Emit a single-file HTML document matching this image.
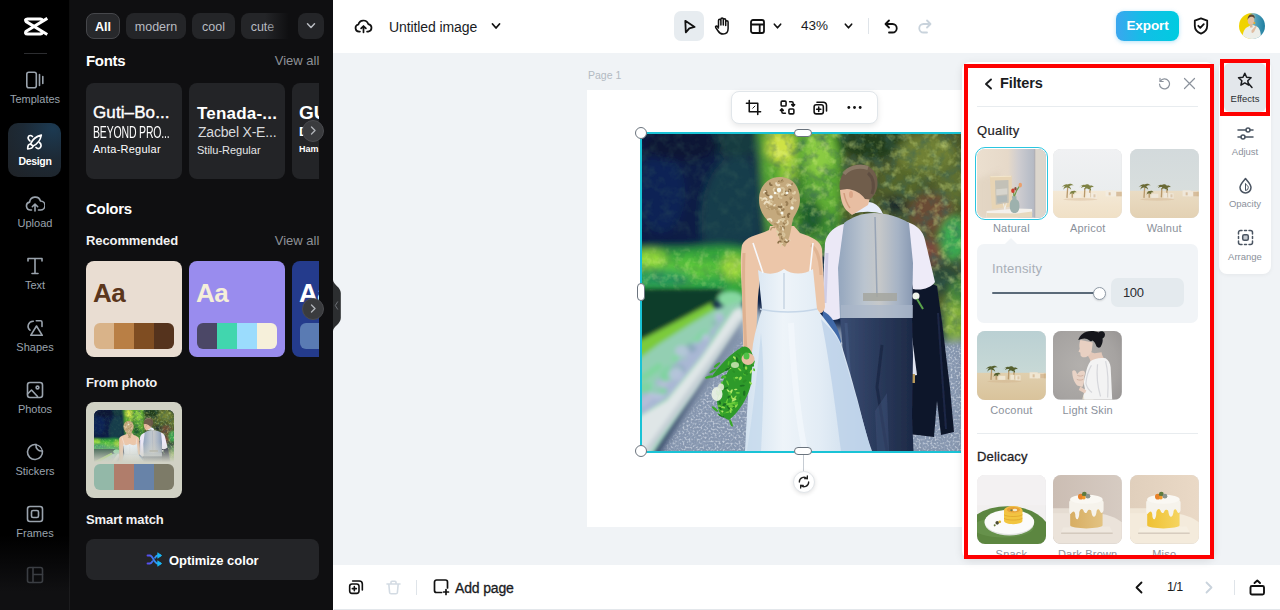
<!DOCTYPE html>
<html><head><meta charset="utf-8"><title>Untitled image</title>
<style>
*{box-sizing:border-box;margin:0;padding:0}
html,body{width:1280px;height:610px;overflow:hidden;background:#f0f3f6;font-family:"Liberation Sans",sans-serif;}
.abs{position:absolute}
#app{position:relative;width:1280px;height:610px;overflow:hidden}
/* left rail */
#rail{position:absolute;left:0;top:0;width:70px;height:610px;background:#000}
.ri{position:absolute;left:0;width:70px;text-align:center;color:#9aa3ad;font-size:11px;letter-spacing:0}
.ri svg{position:absolute;left:25px;top:0;width:20px;height:20px}
.ri span{position:absolute;left:0;width:70px;top:22.500px;line-height:13px}
/* left panel */
#panel{position:absolute;left:70px;top:0;width:263.300px;height:610px;background:#0f0f11}
.chip{position:absolute;top:13px;height:26px;border-radius:8px;background:#242528;color:#b9bcc2;font-size:12.5px;line-height:28px;text-align:center}
.h1{position:absolute;left:16px;color:#fff;font-weight:bold;font-size:15px;letter-spacing:-0.3px}
.h2{position:absolute;left:16px;color:#f2f2f3;font-weight:bold;font-size:13px;letter-spacing:-0.1px}
.va{position:absolute;right:14px;color:#8e9197;font-size:13px;text-align:right}
.fcard{position:absolute;top:83px;height:96px;background:#232427;border-radius:8px;overflow:hidden;color:#fff}
.ccard{position:absolute;top:261px;height:96px;border-radius:8px;overflow:hidden}
.sw{position:absolute;left:8px;top:62px;width:80px;height:26px;border-radius:6px;overflow:hidden;display:flex}
.sw i{flex:1;display:block}
.arrow{position:absolute;width:22px;height:22px;border-radius:50%;background:#3a3b3e;border:1px solid #4a4b4f}
/* top bar */
#top{position:absolute;left:334px;top:0;width:946px;box-shadow:-1px 0 0 #fff;height:53px;background:#fff}
#bottom{position:absolute;left:334px;top:565px;width:946px;height:45px;background:#fff;border-bottom:1px solid #e3e7eb;box-shadow:-1px 0 0 #fff}
.t{position:absolute;white-space:nowrap}
.th{position:absolute;width:68.800px;height:68.500px;border-radius:8px;overflow:hidden;background:#ddd}
.th svg{display:block}
.lb{position:absolute;width:68.800px;text-align:center;font-size:11px;color:#8b919b;white-space:nowrap;letter-spacing:0.2px}
</style></head><body><div id="app">

<!-- canvas -->
<div class="abs" style="left:334px;top:53px;width:946px;height:512px;background:#f0f3f6"></div>
<div class="t" style="left:588px;top:69px;font-size:10.5px;color:#b3bac2">Page 1</div>
<div class="abs" id="page" style="left:587px;top:90px;width:380px;height:437px;background:#fff"></div>

<!-- PHOTO -->
<div class="abs" id="photo" style="left:641px;top:133px;width:320px;height:318px;overflow:hidden">
<svg viewBox="0 0 325 318" width="325" height="318" preserveAspectRatio="none" style="display:block"><defs>
<filter id="bl8" x="-10%" y="-10%" width="120%" height="120%"><feGaussianBlur stdDeviation="4.500"/></filter>
<filter id="bl3" x="-10%" y="-10%" width="120%" height="120%"><feGaussianBlur stdDeviation="2"/></filter>
<filter id="bl1" x="-5%" y="-5%" width="110%" height="110%"><feGaussianBlur stdDeviation="0.600"/></filter>
<filter id="bl15" x="-5%" y="-5%" width="110%" height="110%"><feGaussianBlur stdDeviation="1.200"/></filter>
<linearGradient id="dress" x1="0" y1="0" x2="1" y2="0"><stop offset="0" stop-color="#d3e2f0"/><stop offset=".3" stop-color="#eef4f9"/><stop offset=".6" stop-color="#e2ecf5"/><stop offset="1" stop-color="#c5d7ea"/></linearGradient>
<linearGradient id="vest" x1="0" y1="0" x2="1" y2="0"><stop offset="0" stop-color="#94a6be"/><stop offset=".35" stop-color="#bac4cf"/><stop offset=".55" stop-color="#c6c8c9"/><stop offset=".8" stop-color="#a6b3c5"/><stop offset="1" stop-color="#8899b3"/></linearGradient>
<linearGradient id="trs" x1="0" y1="0" x2="1" y2="0"><stop offset="0" stop-color="#3a4d73"/><stop offset=".45" stop-color="#2c3c5e"/><stop offset="1" stop-color="#1d2a47"/></linearGradient>
<filter id="texd" x="0" y="0" width="100%" height="100%"><feTurbulence type="fractalNoise" baseFrequency="0.09" numOctaves="3" seed="7" result="n"/><feColorMatrix in="n" type="matrix" values="0 0 0 0 0.04  0 0 0 0 0.12  0 0 0 0 0.10  1.900 0 0 0 -0.800"/><feGaussianBlur stdDeviation="0.700"/></filter>
<filter id="texl" x="0" y="0" width="100%" height="100%"><feTurbulence type="fractalNoise" baseFrequency="0.12" numOctaves="3" seed="23" result="n"/><feColorMatrix in="n" type="matrix" values="0 0 0 0 0.78  0 0 0 0 0.92  0 0 0 0 0.30  0 2.200 0 0 -1.050"/><feGaussianBlur stdDeviation="0.600"/></filter>
<mask id="mfol" maskUnits="userSpaceOnUse" x="0" y="0" width="325" height="318"><path d="M126-10h210v215l-36 0V160H160l-30-45z" fill="#fff" filter="url(#bl8)"/></mask>
<mask id="mhed" maskUnits="userSpaceOnUse" x="0" y="0" width="325" height="318"><path d="M-10 116h125v40h-125z" fill="#fff" filter="url(#bl3)"/></mask>
<mask id="mdrk" maskUnits="userSpaceOnUse" x="0" y="0" width="325" height="318"><path d="M-10 -10h128v112h-128z" fill="#fff" filter="url(#bl8)"/></mask>
<filter id="texg" x="0" y="0" width="100%" height="100%"><feTurbulence type="fractalNoise" baseFrequency="0.550" numOctaves="2" seed="11" result="n"/><feColorMatrix in="n" type="matrix" values="0 0 0 0 0.25  0 0 0 0 0.32  0 0 0 0 0.46  2.600 0 0 0 -1.050"/><feGaussianBlur stdDeviation="0.450"/></filter>
<filter id="texgl" x="0" y="0" width="100%" height="100%"><feTurbulence type="fractalNoise" baseFrequency="0.500" numOctaves="2" seed="31" result="n"/><feColorMatrix in="n" type="matrix" values="0 0 0 0 0.85  0 0 0 0 0.89  0 0 0 0 0.94  0 2.600 0 0 -1.200"/><feGaussianBlur stdDeviation="0.450"/></filter>
<mask id="mgrv" maskUnits="userSpaceOnUse" x="0" y="0" width="325" height="318"><path d="M106 200L18 325h312V212h-50z" fill="#fff" filter="url(#bl3)"/></mask>
<pattern id="grv" width="6" height="6" patternUnits="userSpaceOnUse"><rect width="6" height="6" fill="#8391a8"/><circle cx="1.200" cy="1.400" r="1.100" fill="#56647e"/><circle cx="4.200" cy="4.200" r="1.200" fill="#b8c2cf"/><circle cx="4.500" cy="1.200" r=".8" fill="#6a7892"/><circle cx="1.500" cy="4.500" r=".8" fill="#9aa6b8"/></pattern>
</defs>
<g id="ph"><rect width="325" height="318" fill="#0e2146"/>
<g filter="url(#bl8)">
 <!-- dark left -->
 <rect x="-10" y="-10" width="140" height="136" fill="#0d1f44"/>
 <path d="M62 110c-4-30 0-60 14-76 10-10 24-14 34-6 8 10 10 40 8 82z" fill="#173c4c"/>
 <ellipse cx="20" cy="60" rx="24" ry="40" fill="#0e2454"/>
 <ellipse cx="95" cy="10" rx="30" ry="14" fill="#143a40"/>
 <ellipse cx="40" cy="12" rx="40" ry="16" fill="#0b1836"/>
 <!-- bright trees centre -->
 <path d="M116-10h90v130h-50l-30-10-6-70z" fill="#55a530"/>
 <ellipse cx="140" cy="14" rx="14" ry="16" fill="#cfe244"/>
 <ellipse cx="150" cy="40" rx="10" ry="14" fill="#9fd23c"/>
 <ellipse cx="178" cy="22" rx="14" ry="24" fill="#8acb42"/>
 <ellipse cx="183" cy="60" rx="10" ry="22" fill="#62b034"/>
 <ellipse cx="168" cy="86" rx="12" ry="20" fill="#2a6c2c"/>
 <ellipse cx="190" cy="100" rx="10" ry="20" fill="#3c8a30"/>
 <ellipse cx="158" cy="60" rx="5" ry="30" fill="#2e742c"/>
 <ellipse cx="172" cy="84" rx="10" ry="16" fill="#1f5c2a"/>
 <!-- top right olive -->
 <rect x="200" y="-10" width="135" height="190" fill="#4c5829"/>
 <ellipse cx="232" cy="8" rx="36" ry="20" fill="#233c1c"/>
 <ellipse cx="285" cy="22" rx="30" ry="20" fill="#6f8034"/>
 <ellipse cx="312" cy="50" rx="16" ry="24" fill="#5f7030"/>
 <ellipse cx="262" cy="48" rx="22" ry="14" fill="#55662c"/>
 <ellipse cx="255" cy="72" rx="12" ry="10" fill="#1c2c2a"/>
 <ellipse cx="290" cy="80" rx="22" ry="20" fill="#6a4c36"/>
 <ellipse cx="313" cy="105" rx="14" ry="22" fill="#3cae52"/>
 <ellipse cx="288" cy="120" rx="12" ry="16" fill="#7a4a3c"/>
 <ellipse cx="300" cy="146" rx="22" ry="16" fill="#2c4a38"/>
 <ellipse cx="316" cy="190" rx="14" ry="34" fill="#86b23c"/>
 <ellipse cx="318" cy="160" rx="10" ry="14" fill="#4a8a3a"/>
 <!-- hedges left -->
 <path d="M-10 117c20-4 40 0 60-2s40-4 60 2v48h-120z" fill="#34a83a"/>
 <ellipse cx="8" cy="126" rx="18" ry="9" fill="#94da3a"/>
 <ellipse cx="50" cy="136" rx="30" ry="10" fill="#5cc63a"/>
 <ellipse cx="92" cy="134" rx="11" ry="12" fill="#a4de3c"/>
 <ellipse cx="20" cy="146" rx="30" ry="9" fill="#27985a"/>
 <ellipse cx="70" cy="152" rx="20" ry="8" fill="#2aa04a"/>
</g><g filter="url(#bl3)">
 <path d="M-10 156h94l-14 14-30 16-50 26z" fill="#103c2a"/>
 <ellipse cx="90" cy="166" rx="13" ry="8" fill="#86d8a0"/>
 <!-- lawn -->
 <!-- lavender -->
 <path d="M100 168L60 180-10 200v125h20L104 182z" fill="#93cfb2"/><path d="M60 204L20 244-10 270v20l40-30 40-44z" fill="#9fc4c4"/>
 <path d="M84 184L44 222 0 262v22l30-22 34-44z" fill="#a9b7d4"/>
 <path d="M66 198l-34 30" stroke="#86d6a4" stroke-width="6"/>
 <path d="M40 234l-40 38" stroke="#b6bfd8" stroke-width="7"/>
 <path d="M20 232l-20 14" stroke="#7fd69c" stroke-width="6"/>
 <g filter="url(#bl1)"><ellipse cx="61" cy="202" rx="3.9" ry="3.1" fill="#7fd4a0" opacity=".85"/><ellipse cx="37" cy="237" rx="4.3" ry="3.4" fill="#b8c4de" opacity=".85"/><ellipse cx="67" cy="203" rx="3.9" ry="3.1" fill="#7fd4a0" opacity=".85"/><ellipse cx="28" cy="237" rx="5.1" ry="4.1" fill="#7fd4a0" opacity=".85"/><ellipse cx="80" cy="182" rx="1.9" ry="1.6" fill="#7fd4a0" opacity=".85"/><ellipse cx="26" cy="242" rx="7.2" ry="5.8" fill="#7fd4a0" opacity=".85"/><ellipse cx="17" cy="260" rx="7.7" ry="6.2" fill="#b8c4de" opacity=".85"/><ellipse cx="42" cy="224" rx="3.6" ry="2.9" fill="#9cc8c0" opacity=".85"/><ellipse cx="65" cy="204" rx="4.3" ry="3.5" fill="#b8c4de" opacity=".85"/><ellipse cx="15" cy="256" rx="5.7" ry="4.5" fill="#7fd4a0" opacity=".85"/><ellipse cx="37" cy="237" rx="7.1" ry="5.7" fill="#8aa6bc" opacity=".85"/><ellipse cx="73" cy="190" rx="2.3" ry="1.8" fill="#8aa6bc" opacity=".85"/><ellipse cx="22" cy="258" rx="4.4" ry="3.5" fill="#7fd4a0" opacity=".85"/><ellipse cx="32" cy="244" rx="4.7" ry="3.7" fill="#9cc8c0" opacity=".85"/><ellipse cx="78" cy="199" rx="2.8" ry="2.3" fill="#86dca8" opacity=".85"/><ellipse cx="78" cy="183" rx="4.0" ry="3.2" fill="#b8c4de" opacity=".85"/><ellipse cx="10" cy="254" rx="5.9" ry="4.7" fill="#86dca8" opacity=".85"/><ellipse cx="36" cy="237" rx="5.4" ry="4.3" fill="#9cc8c0" opacity=".85"/><ellipse cx="4" cy="255" rx="7.2" ry="5.8" fill="#7fd4a0" opacity=".85"/><ellipse cx="15" cy="255" rx="4.9" ry="3.9" fill="#9cc8c0" opacity=".85"/><ellipse cx="79" cy="186" rx="4.2" ry="3.3" fill="#aab8d8" opacity=".85"/><ellipse cx="50" cy="215" rx="5.8" ry="4.7" fill="#8aa6bc" opacity=".85"/><ellipse cx="24" cy="245" rx="4.7" ry="3.7" fill="#7fd4a0" opacity=".85"/><ellipse cx="35" cy="241" rx="7.7" ry="6.1" fill="#b8c4de" opacity=".85"/><ellipse cx="41" cy="218" rx="7.1" ry="5.7" fill="#b8c4de" opacity=".85"/><ellipse cx="54" cy="211" rx="2.8" ry="2.2" fill="#aab8d8" opacity=".85"/></g>
 <path d="M-10 208l50-24 30-14 5 6-27 16-30 19-28 21z" fill="#7ccb3a"/>
 <path d="M-10 156h94l-14 14-30 16-50 26z" fill="#103c2a"/>
</g><g filter="url(#bl8)">
 <!-- gravel base -->
 <path d="M104 176L14 325h316V205l-50 5z" fill="#8696ae"/>
 <ellipse cx="112" cy="190" rx="12" ry="16" fill="#a9bccb"/>
</g>
<!-- foliage texture -->
<g mask="url(#mfol)"><rect width="325" height="318" fill="#000" filter="url(#texd)" opacity=".7"/><rect width="325" height="318" fill="#000" filter="url(#texl)" opacity=".45"/></g>
<g mask="url(#mhed)"><rect width="325" height="318" fill="#000" filter="url(#texl)" opacity=".4"/><rect width="325" height="318" fill="#000" filter="url(#texd)" opacity=".3"/></g>
<g mask="url(#mdrk)"><rect width="325" height="318" fill="#000" filter="url(#texd)" opacity=".4"/></g>
<!-- gravel texture -->
<g mask="url(#mgrv)"><rect width="325" height="318" fill="#000" filter="url(#texg)" opacity=".8"/><rect width="325" height="318" fill="#000" filter="url(#texgl)" opacity=".7"/></g>
<!-- kerb -->
<g filter="url(#bl3)"><path d="M93 177l8-3 2 12-50 74-36 48-8 12H-6v-34l32-19 34-42z" fill="#dfe6e7"/><path d="M103 186L53 260 17 308l-8 10h-6L98 186z" fill="#aebbc6" opacity=".55"/></g>

<g filter="url(#bl1)">
<!-- jacket -->
<path d="M266 154c8-5 22-5 30-1l5 36 8 66 4 44-13 3-4-34-3 36-25-3-4-44z" fill="#0f172c"/>
<path d="M297 180l4 60 4 56" stroke="#1c2744" stroke-width="2" fill="none"/>
<path d="M266 198l5 6 5 38-6 1c-3-10-5-25-4-45z" fill="#dfe3f0"/><rect x="270.500" y="241" width="3.500" height="9" fill="#b99a5a"/>
<!-- trousers -->
<path d="M199 183h72l1 40-1 60 1.500 35h-48l-20-70z" fill="url(#trs)"/>
<path d="M241 212l-5 42 10 64" stroke="#18223c" stroke-width="3" fill="none" opacity=".6"/><path d="M246 260l2 58h-12l-2-40z" fill="#3a4c72" opacity=".6"/>
<path d="M205 190l4 60" stroke="#4a5f88" stroke-width="3" fill="none" opacity=".5"/>
<!-- groom shirt sleeves -->
<path d="M206 90c-12 3-20 9-22 20l-2 42 1 32c5 4 13 4 18 0l4-46z" fill="#ebe8f6"/>
<path d="M186 120l-2 50" stroke="#cfcde6" stroke-width="3" fill="none"/>
<path d="M266 89c10 3 16 9 18 18l10 42c-4 6-14 9-22 7l-6-30z" fill="#eeebf8"/>
<!-- vest -->
<path d="M203 90c8-6 18-10 30-10s26 4 35 10l4 40-1 55h-72l-2-50z" fill="url(#vest)"/>
<path d="M234 84l2 80" stroke="#8696ad" stroke-width="1.500" fill="none" opacity=".7"/>
<path d="M222 160h34v8h-34z" fill="#a5a69f" opacity=".85"/><path d="M200 172h72v13h-72z" fill="#a9b7c9" opacity=".7"/>
<!-- collar -->
<path d="M211 81c3-8 10-12 16-12s12 4 15 12c-10-3-21-3-31 0z" fill="#e6ecfa"/>
<!-- groom neck/head -->
<path d="M199 55c0 9 2 17 6 22l6 5 16-10 2-7-8-8z" fill="#e8bea2"/>
<path d="M203 60c1 6 3 11 6 15" stroke="#cf9b7c" stroke-width="1.500" fill="none"/>
<path d="M199 57C197 44 205 32 218 31.500 230 31.500 237.500 40 236.500 52 236 58 233 63 229 66.500L224 66C220 60 213 56.500 206 56z" fill="#6f5d4c"/>
<path d="M203 41c4-6 14-9 24-6" stroke="#9a8874" stroke-width="4" fill="none" opacity=".65"/><path d="M227 40c5 4 7 12 4 21" stroke="#54453a" stroke-width="3" fill="none" opacity=".6"/>
<ellipse cx="210" cy="61.500" rx="2" ry="3.500" fill="#dba688"/>
<!-- bride skin -->
<path d="M128 97c-10 5-23 6-27 15-2 10-1 30 0 50l1 40c0 10 0 18 2 24 3 3 8 2 10-2l3-60 2-20h50l4 22 2 12c4 4 8 2 9-4l-3-58c-1-8-10-12-22-16l-6-7h-24z" fill="#ecc6a9"/>
<path d="M103 120c-1 20 0 60 2 100" stroke="#d9a886" stroke-width="3" fill="none" opacity=".7"/>
<path d="M170 112c6 4 9 12 10 30" stroke="#d9a886" stroke-width="3" fill="none" opacity=".6"/>
<!-- dress -->
<path d="M182 178c8 4 14 12 18 30l-4 20-16-30z" fill="#3f69a8"/><path d="M117 137c8 5 18 5 26-1 8 6 20 6 29 0l4 40C186 190 196 200 200 211S212 250 216 265 226 305 231 318H104C106 280 108 240 112 211 114 198 118 186 121 176z" fill="url(#dress)"/>
<path d="M112 110l10 30M172 110l-3 28" stroke="#f6f8fc" stroke-width="1.600" fill="none"/>
<path d="M143 140v36" stroke="#b5c6d8" stroke-width="1"/>
<path d="M119 176c16 4 40 4 57 0" stroke="#c5d6e8" stroke-width="1.500" fill="none"/>
<path d="M180 186c10 10 17 18 20 27 5 20 20 65 30 105h-30c-5-40-12-94-20-132z" fill="#bcd1e8" opacity=".8"/>
<path d="M120 200c-4 40-8 80-14 118h14c2-40 4-80 0-118z" fill="#c6d9ec" opacity=".8"/>
<path d="M150 190c2 40 6 90 14 128" stroke="#f4f8fc" stroke-width="6" fill="none" opacity=".7"/>
<!-- hair -->
<path d="M118 67c0-14 9-23 21-23s20 9 20 23c0 8-4 13-7 19-2 8-2 18-8 28-6-3-6-13-9-19-9-6-17-16-17-28z" fill="#c4a97d"/>
<path d="M137.7 48.2Q140.3 49.7 141.3 46.8" stroke="#8a7048" stroke-width="1.2" fill="none" stroke-linecap="round"/>
<path d="M152.1 60.4Q153.8 60.8 153.9 59.1" stroke="#e0cfa8" stroke-width="2.1" fill="none" stroke-linecap="round"/>
<path d="M145.7 72.0Q147.3 70.3 145.3 69.0" stroke="#9a7f55" stroke-width="2.1" fill="none" stroke-linecap="round"/>
<path d="M142.2 88.5Q141.8 91.2 144.5 91.2" stroke="#9a7f55" stroke-width="1.3" fill="none" stroke-linecap="round"/>
<path d="M141.4 84.1Q142.9 85.3 143.7 83.6" stroke="#9a7f55" stroke-width="1.5" fill="none" stroke-linecap="round"/>
<path d="M142.1 99.1Q140.2 101.9 143.3 103.3" stroke="#d6c29a" stroke-width="1.4" fill="none" stroke-linecap="round"/>
<path d="M133.5 94.7Q130.3 93.6 129.7 96.9" stroke="#b3976a" stroke-width="1.3" fill="none" stroke-linecap="round"/>
<path d="M137.7 65.3Q138.6 63.3 136.4 62.7" stroke="#b3976a" stroke-width="1.6" fill="none" stroke-linecap="round"/>
<path d="M135.9 57.9Q134.5 56.7 133.5 58.3" stroke="#b3976a" stroke-width="2.2" fill="none" stroke-linecap="round"/>
<path d="M138.5 47.6Q140.2 50.2 142.4 48.1" stroke="#b3976a" stroke-width="1.6" fill="none" stroke-linecap="round"/>
<path d="M142.1 96.7Q142.4 93.3 139.0 93.6" stroke="#ecdfc2" stroke-width="2.0" fill="none" stroke-linecap="round"/>
<path d="M141.6 110.4Q139.0 110.5 139.6 113.0" stroke="#e0cfa8" stroke-width="1.3" fill="none" stroke-linecap="round"/>
<path d="M144.7 106.3Q146.2 109.4 148.9 107.3" stroke="#ecdfc2" stroke-width="1.4" fill="none" stroke-linecap="round"/>
<path d="M134.0 71.9Q131.5 73.3 133.4 75.6" stroke="#ecdfc2" stroke-width="1.5" fill="none" stroke-linecap="round"/>
<path d="M140.7 71.0Q140.0 73.8 142.9 74.0" stroke="#e0cfa8" stroke-width="1.4" fill="none" stroke-linecap="round"/>
<path d="M151.6 64.8Q149.7 64.2 149.4 66.2" stroke="#8a7048" stroke-width="1.5" fill="none" stroke-linecap="round"/>
<path d="M134.5 59.8Q136.6 61.7 138.1 59.3" stroke="#e0cfa8" stroke-width="1.5" fill="none" stroke-linecap="round"/>
<path d="M151.9 64.2Q151.5 67.5 154.8 67.4" stroke="#e0cfa8" stroke-width="1.3" fill="none" stroke-linecap="round"/>
<path d="M148.3 80.8Q146.0 81.8 147.4 83.8" stroke="#8a7048" stroke-width="2.1" fill="none" stroke-linecap="round"/>
<path d="M139.6 96.7Q141.3 94.9 139.2 93.5" stroke="#b3976a" stroke-width="1.7" fill="none" stroke-linecap="round"/>
<path d="M142.5 87.2Q141.6 85.5 140.1 86.7" stroke="#e0cfa8" stroke-width="2.1" fill="none" stroke-linecap="round"/>
<path d="M125.6 66.7Q124.6 64.4 122.5 65.8" stroke="#ecdfc2" stroke-width="2.0" fill="none" stroke-linecap="round"/>
<path d="M142.7 103.4Q144.5 102.1 142.8 100.5" stroke="#d6c29a" stroke-width="1.9" fill="none" stroke-linecap="round"/>
<path d="M145.0 91.4Q147.1 88.7 144.1 87.1" stroke="#b3976a" stroke-width="1.8" fill="none" stroke-linecap="round"/>
<path d="M151.8 67.1Q149.6 68.9 151.8 70.8" stroke="#e0cfa8" stroke-width="1.5" fill="none" stroke-linecap="round"/>
<path d="M133.5 55.4Q131.6 56.6 133.1 58.2" stroke="#e0cfa8" stroke-width="1.6" fill="none" stroke-linecap="round"/>
<path d="M143.6 108.4Q146.2 110.6 147.9 107.7" stroke="#8a7048" stroke-width="1.3" fill="none" stroke-linecap="round"/>
<path d="M136.3 89.6Q138.4 89.5 137.9 87.4" stroke="#ecdfc2" stroke-width="1.9" fill="none" stroke-linecap="round"/>
<path d="M142.0 88.8Q141.5 86.0 138.8 87.0" stroke="#e0cfa8" stroke-width="1.5" fill="none" stroke-linecap="round"/>
<path d="M144.8 58.3Q146.1 59.7 147.3 58.2" stroke="#8a7048" stroke-width="1.6" fill="none" stroke-linecap="round"/>
<path d="M141.4 82.3Q141.6 80.6 139.9 80.7" stroke="#e0cfa8" stroke-width="2.2" fill="none" stroke-linecap="round"/>
<path d="M143.2 61.8Q145.1 63.4 146.3 61.2" stroke="#8a7048" stroke-width="1.2" fill="none" stroke-linecap="round"/>
<path d="M128.2 76.7Q128.0 74.7 126.0 75.3" stroke="#b3976a" stroke-width="1.2" fill="none" stroke-linecap="round"/>
<path d="M136.4 78.6Q136.4 81.8 139.5 81.3" stroke="#b3976a" stroke-width="2.2" fill="none" stroke-linecap="round"/>
<path d="M135.4 76.3Q133.4 73.5 131.0 76.0" stroke="#b3976a" stroke-width="2.2" fill="none" stroke-linecap="round"/>
<path d="M143.2 95.7Q143.7 93.5 141.4 93.5" stroke="#9a7f55" stroke-width="1.4" fill="none" stroke-linecap="round"/>
<path d="M130.6 67.3Q130.3 69.0 132.0 68.9" stroke="#d6c29a" stroke-width="1.2" fill="none" stroke-linecap="round"/>
<path d="M125.6 59.7Q125.0 62.4 127.8 62.5" stroke="#8a7048" stroke-width="1.6" fill="none" stroke-linecap="round"/>
<path d="M139.9 76.7Q141.7 78.2 142.8 76.2" stroke="#9a7f55" stroke-width="1.8" fill="none" stroke-linecap="round"/>
<path d="M151.1 64.3Q149.0 63.6 148.7 65.7" stroke="#b3976a" stroke-width="1.7" fill="none" stroke-linecap="round"/>
<path d="M132.3 67.0Q132.5 64.6 130.0 64.9" stroke="#b3976a" stroke-width="1.2" fill="none" stroke-linecap="round"/>
<path d="M128.8 74.7Q128.1 72.7 126.3 73.7" stroke="#e0cfa8" stroke-width="2.0" fill="none" stroke-linecap="round"/>
<path d="M137.7 73.8Q139.2 75.4 140.4 73.6" stroke="#8a7048" stroke-width="2.2" fill="none" stroke-linecap="round"/>
<path d="M149.5 51.8Q151.1 52.1 151.2 50.6" stroke="#9a7f55" stroke-width="1.5" fill="none" stroke-linecap="round"/>
<path d="M133.4 75.3Q132.2 73.2 130.3 74.7" stroke="#b3976a" stroke-width="1.9" fill="none" stroke-linecap="round"/>
<path d="M130.5 87.7Q129.5 85.0 127.0 86.5" stroke="#ecdfc2" stroke-width="2.1" fill="none" stroke-linecap="round"/>
<path d="M154.3 67.6Q151.9 66.5 151.2 69.1" stroke="#d6c29a" stroke-width="2.2" fill="none" stroke-linecap="round"/>
<path d="M148.9 51.8Q146.7 49.9 145.3 52.3" stroke="#d6c29a" stroke-width="1.4" fill="none" stroke-linecap="round"/>
<path d="M140.7 61.5Q143.6 61.1 142.7 58.3" stroke="#e0cfa8" stroke-width="1.8" fill="none" stroke-linecap="round"/>
<path d="M128.6 67.9Q127.6 70.7 130.5 71.1" stroke="#e0cfa8" stroke-width="2.2" fill="none" stroke-linecap="round"/>
<path d="M126.7 72.6Q127.8 75.4 130.3 73.8" stroke="#b3976a" stroke-width="2.0" fill="none" stroke-linecap="round"/>
<path d="M136.5 102.6Q138.8 99.9 135.8 98.2" stroke="#e0cfa8" stroke-width="1.9" fill="none" stroke-linecap="round"/>
<path d="M143.1 58.2Q143.9 54.8 140.4 54.7" stroke="#d6c29a" stroke-width="2.1" fill="none" stroke-linecap="round"/>
<path d="M140.7 103.8Q139.8 105.5 141.7 106.0" stroke="#9a7f55" stroke-width="1.3" fill="none" stroke-linecap="round"/>
<path d="M124.8 60.4Q126.3 59.1 124.7 57.7" stroke="#8a7048" stroke-width="1.8" fill="none" stroke-linecap="round"/>
<path d="M139.6 108.6Q137.7 107.7 137.1 109.8" stroke="#8a7048" stroke-width="1.7" fill="none" stroke-linecap="round"/>
<path d="M128.9 50.1Q128.6 52.2 130.7 52.2" stroke="#8a7048" stroke-width="1.8" fill="none" stroke-linecap="round"/>
<path d="M149.8 58.1Q150.0 56.0 147.9 56.2" stroke="#8a7048" stroke-width="1.4" fill="none" stroke-linecap="round"/>
<path d="M145.0 91.9Q148.0 90.9 146.4 88.1" stroke="#e0cfa8" stroke-width="1.9" fill="none" stroke-linecap="round"/>
<path d="M135.2 50.2Q135.6 53.1 138.3 52.1" stroke="#ecdfc2" stroke-width="2.1" fill="none" stroke-linecap="round"/>
<path d="M127.7 69.6Q125.0 67.5 123.5 70.6" stroke="#ecdfc2" stroke-width="2.0" fill="none" stroke-linecap="round"/>
<path d="M137.8 61.4Q137.0 64.7 140.4 65.0" stroke="#d6c29a" stroke-width="2.0" fill="none" stroke-linecap="round"/>
<path d="M143.7 86.3Q142.4 84.9 141.2 86.5" stroke="#d6c29a" stroke-width="1.8" fill="none" stroke-linecap="round"/>
<path d="M139.5 77.5Q139.5 75.3 137.3 75.6" stroke="#e0cfa8" stroke-width="1.6" fill="none" stroke-linecap="round"/>
<path d="M136.6 94.0Q137.1 90.6 133.6 90.8" stroke="#b3976a" stroke-width="1.7" fill="none" stroke-linecap="round"/>
<path d="M124.6 58.4Q122.9 58.0 122.8 59.7" stroke="#ecdfc2" stroke-width="1.4" fill="none" stroke-linecap="round"/>
<path d="M121.1 67.2Q121.8 65.1 119.6 64.8" stroke="#e0cfa8" stroke-width="1.7" fill="none" stroke-linecap="round"/>
<path d="M140.0 101.3Q138.6 100.3 137.8 101.8" stroke="#9a7f55" stroke-width="1.9" fill="none" stroke-linecap="round"/>
<path d="M149.9 52.3Q147.9 50.7 146.6 53.0" stroke="#ecdfc2" stroke-width="1.5" fill="none" stroke-linecap="round"/>
<path d="M136.5 75.4Q135.3 74.3 134.4 75.7" stroke="#b3976a" stroke-width="1.5" fill="none" stroke-linecap="round"/>
<circle cx="138" cy="57" r="2.2" fill="#f6f8ee"/>
<circle cx="130" cy="64" r="1.8" fill="#f6f8ee"/>
<circle cx="151" cy="75" r="1.8" fill="#f6f8ee"/>
<circle cx="141" cy="80" r="1.5" fill="#f6f8ee"/>
<circle cx="134" cy="60" r="1.3" fill="#f6f8ee"/>
<circle cx="146" cy="60" r="1.4" fill="#f6f8ee"/>
<!-- bouquet -->
<path d="M101 214c5-2 9 2 11 9l-2 28c-3 14-12 28-22 36-7-2-12-10-12-20 1-12 8-22 12-31-7 4-13 8-18 9 6-10 20-25 31-31z" fill="#2f9a2a"/>
<ellipse cx="94.7" cy="225.2" rx="1.8" ry="1.2" transform="rotate(153 94.7 225.2)" fill="#8fdc4c"/>
<ellipse cx="103.5" cy="241.3" rx="1.8" ry="0.7" transform="rotate(29 103.5 241.3)" fill="#4fbd30"/>
<ellipse cx="93.8" cy="264.7" rx="2.7" ry="0.8" transform="rotate(127 93.8 264.7)" fill="#8fdc4c"/>
<ellipse cx="105.5" cy="240.7" rx="1.9" ry="1.1" transform="rotate(29 105.5 240.7)" fill="#2a8f26"/>
<ellipse cx="88.3" cy="264.6" rx="1.6" ry="1.2" transform="rotate(1 88.3 264.6)" fill="#1d7322"/>
<ellipse cx="88.6" cy="234.9" rx="2.5" ry="1.3" transform="rotate(151 88.6 234.9)" fill="#b4e86a"/>
<ellipse cx="109.6" cy="226.2" rx="1.6" ry="0.8" transform="rotate(168 109.6 226.2)" fill="#2a8f26"/>
<ellipse cx="103.6" cy="248.2" rx="2.3" ry="1.1" transform="rotate(150 103.6 248.2)" fill="#2a8f26"/>
<ellipse cx="80.4" cy="280.6" rx="1.8" ry="0.8" transform="rotate(115 80.4 280.6)" fill="#8fdc4c"/>
<ellipse cx="78.5" cy="273.3" rx="1.6" ry="1.1" transform="rotate(29 78.5 273.3)" fill="#6ccc3a"/>
<ellipse cx="104.2" cy="222.9" rx="2.1" ry="1.1" transform="rotate(103 104.2 222.9)" fill="#b4e86a"/>
<ellipse cx="107.1" cy="224.3" rx="3.2" ry="1.0" transform="rotate(160 107.1 224.3)" fill="#4fbd30"/>
<ellipse cx="83.8" cy="242.9" rx="2.0" ry="0.8" transform="rotate(147 83.8 242.9)" fill="#2a8f26"/>
<ellipse cx="101.2" cy="252.7" rx="2.6" ry="0.9" transform="rotate(174 101.2 252.7)" fill="#1d7322"/>
<ellipse cx="76.7" cy="261.6" rx="2.1" ry="0.8" transform="rotate(51 76.7 261.6)" fill="#1d7322"/>
<ellipse cx="85.1" cy="270.3" rx="2.0" ry="1.3" transform="rotate(0 85.1 270.3)" fill="#4fbd30"/>
<ellipse cx="90.0" cy="259.0" rx="3.1" ry="1.1" transform="rotate(118 90.0 259.0)" fill="#b4e86a"/>
<ellipse cx="80.9" cy="250.1" rx="2.0" ry="0.9" transform="rotate(101 80.9 250.1)" fill="#4fbd30"/>
<ellipse cx="103.9" cy="236.0" rx="2.8" ry="1.0" transform="rotate(11 103.9 236.0)" fill="#2a8f26"/>
<ellipse cx="111.7" cy="231.9" rx="1.9" ry="1.3" transform="rotate(78 111.7 231.9)" fill="#2a8f26"/>
<ellipse cx="97.1" cy="234.8" rx="1.5" ry="1.1" transform="rotate(59 97.1 234.8)" fill="#3aa82c"/>
<ellipse cx="112.6" cy="229.9" rx="2.6" ry="0.8" transform="rotate(109 112.6 229.9)" fill="#3aa82c"/>
<ellipse cx="87.8" cy="275.3" rx="3.1" ry="1.0" transform="rotate(57 87.8 275.3)" fill="#1d7322"/>
<ellipse cx="88.9" cy="233.6" rx="2.3" ry="1.0" transform="rotate(29 88.9 233.6)" fill="#2a8f26"/>
<ellipse cx="108.2" cy="227.6" rx="3.2" ry="0.7" transform="rotate(9 108.2 227.6)" fill="#6ccc3a"/>
<ellipse cx="105.1" cy="235.0" rx="1.8" ry="1.2" transform="rotate(84 105.1 235.0)" fill="#8fdc4c"/>
<ellipse cx="87.3" cy="257.8" rx="2.1" ry="0.8" transform="rotate(43 87.3 257.8)" fill="#b4e86a"/>
<ellipse cx="92.5" cy="273.4" rx="1.7" ry="1.2" transform="rotate(72 92.5 273.4)" fill="#1d7322"/>
<ellipse cx="81.7" cy="244.1" rx="2.0" ry="1.3" transform="rotate(136 81.7 244.1)" fill="#3aa82c"/>
<ellipse cx="83.6" cy="271.3" rx="2.6" ry="1.2" transform="rotate(155 83.6 271.3)" fill="#1d7322"/>
<ellipse cx="78.2" cy="264.2" rx="2.9" ry="0.7" transform="rotate(112 78.2 264.2)" fill="#b4e86a"/>
<ellipse cx="100.8" cy="222.7" rx="2.7" ry="0.9" transform="rotate(86 100.8 222.7)" fill="#3aa82c"/>
<ellipse cx="95.2" cy="272.5" rx="2.4" ry="1.2" transform="rotate(121 95.2 272.5)" fill="#8fdc4c"/>
<ellipse cx="78.1" cy="281.7" rx="2.0" ry="0.7" transform="rotate(37 78.1 281.7)" fill="#3aa82c"/>
<ellipse cx="99.3" cy="245.4" rx="2.0" ry="1.3" transform="rotate(129 99.3 245.4)" fill="#8fdc4c"/>
<ellipse cx="81.3" cy="274.1" rx="3.1" ry="0.9" transform="rotate(16 81.3 274.1)" fill="#8fdc4c"/>
<ellipse cx="99.2" cy="265.2" rx="1.9" ry="1.0" transform="rotate(110 99.2 265.2)" fill="#2a8f26"/>
<ellipse cx="113.1" cy="236.7" rx="1.5" ry="0.9" transform="rotate(71 113.1 236.7)" fill="#4fbd30"/>
<ellipse cx="88.9" cy="264.7" rx="2.0" ry="0.9" transform="rotate(122 88.9 264.7)" fill="#3aa82c"/>
<ellipse cx="91.1" cy="265.0" rx="3.0" ry="0.8" transform="rotate(67 91.1 265.0)" fill="#8fdc4c"/>
<ellipse cx="93.5" cy="266.5" rx="1.6" ry="0.9" transform="rotate(171 93.5 266.5)" fill="#4fbd30"/>
<ellipse cx="86.7" cy="236.0" rx="3.0" ry="1.1" transform="rotate(149 86.7 236.0)" fill="#1d7322"/>
<ellipse cx="98.7" cy="236.6" rx="2.2" ry="0.8" transform="rotate(44 98.7 236.6)" fill="#8fdc4c"/>
<ellipse cx="87.6" cy="230.2" rx="2.5" ry="0.8" transform="rotate(101 87.6 230.2)" fill="#4fbd30"/>
<ellipse cx="83.8" cy="243.9" rx="1.6" ry="1.3" transform="rotate(59 83.8 243.9)" fill="#4fbd30"/>
<ellipse cx="94.8" cy="270.6" rx="2.6" ry="1.3" transform="rotate(153 94.8 270.6)" fill="#4fbd30"/>
<ellipse cx="86.8" cy="278.0" rx="1.5" ry="1.1" transform="rotate(151 86.8 278.0)" fill="#2a8f26"/>
<ellipse cx="95.2" cy="228.5" rx="2.8" ry="1.1" transform="rotate(19 95.2 228.5)" fill="#3aa82c"/>
<ellipse cx="80.5" cy="271.3" rx="2.5" ry="1.2" transform="rotate(99 80.5 271.3)" fill="#3aa82c"/>
<ellipse cx="93.7" cy="224.7" rx="2.1" ry="1.0" transform="rotate(37 93.7 224.7)" fill="#b4e86a"/>
<ellipse cx="86.4" cy="279.2" rx="2.3" ry="0.7" transform="rotate(169 86.4 279.2)" fill="#6ccc3a"/>
<ellipse cx="79.4" cy="275.8" rx="2.1" ry="1.1" transform="rotate(69 79.4 275.8)" fill="#1d7322"/>
<ellipse cx="93.3" cy="266.0" rx="2.3" ry="0.9" transform="rotate(21 93.3 266.0)" fill="#b4e86a"/>
<ellipse cx="95.7" cy="230.9" rx="2.6" ry="1.2" transform="rotate(163 95.7 230.9)" fill="#2a8f26"/>
<ellipse cx="85.0" cy="255.2" rx="2.4" ry="0.7" transform="rotate(153 85.0 255.2)" fill="#1d7322"/>
<ellipse cx="80.5" cy="282.9" rx="3.1" ry="1.0" transform="rotate(26 80.5 282.9)" fill="#1d7322"/>
<ellipse cx="83.8" cy="280.2" rx="1.7" ry="0.9" transform="rotate(168 83.8 280.2)" fill="#3aa82c"/>
<ellipse cx="108.2" cy="224.1" rx="1.5" ry="1.0" transform="rotate(146 108.2 224.1)" fill="#1d7322"/>
<ellipse cx="79.3" cy="277.9" rx="2.9" ry="0.7" transform="rotate(35 79.3 277.9)" fill="#6ccc3a"/>
<ellipse cx="98.0" cy="230.8" rx="2.4" ry="0.7" transform="rotate(124 98.0 230.8)" fill="#1d7322"/>
<ellipse cx="87.8" cy="271.1" rx="2.6" ry="1.1" transform="rotate(169 87.8 271.1)" fill="#6ccc3a"/>
<ellipse cx="96.1" cy="226.3" rx="3.0" ry="1.2" transform="rotate(74 96.1 226.3)" fill="#1d7322"/>
<ellipse cx="107.9" cy="220.2" rx="2.0" ry="0.8" transform="rotate(61 107.9 220.2)" fill="#3aa82c"/>
<ellipse cx="89.5" cy="278.1" rx="2.0" ry="1.0" transform="rotate(76 89.5 278.1)" fill="#8fdc4c"/>
<ellipse cx="105.6" cy="224.3" rx="1.6" ry="1.1" transform="rotate(136 105.6 224.3)" fill="#2a8f26"/>
<ellipse cx="90.2" cy="273.4" rx="2.9" ry="1.3" transform="rotate(3 90.2 273.4)" fill="#6ccc3a"/>
<ellipse cx="93.2" cy="246.1" rx="2.6" ry="0.7" transform="rotate(66 93.2 246.1)" fill="#3aa82c"/>
<ellipse cx="86.6" cy="249.8" rx="2.8" ry="0.8" transform="rotate(67 86.6 249.8)" fill="#6ccc3a"/>
<ellipse cx="90.3" cy="276.2" rx="1.7" ry="0.9" transform="rotate(51 90.3 276.2)" fill="#8fdc4c"/>
<ellipse cx="95.5" cy="244.8" rx="1.9" ry="1.0" transform="rotate(174 95.5 244.8)" fill="#8fdc4c"/>
<ellipse cx="97.1" cy="222.1" rx="2.6" ry="0.7" transform="rotate(43 97.1 222.1)" fill="#2a8f26"/>
<ellipse cx="85.9" cy="268.3" rx="2.8" ry="0.7" transform="rotate(110 85.9 268.3)" fill="#6ccc3a"/>
<ellipse cx="104.7" cy="239.4" rx="2.4" ry="1.0" transform="rotate(140 104.7 239.4)" fill="#2a8f26"/>
<ellipse cx="103.2" cy="260.3" rx="2.7" ry="1.3" transform="rotate(95 103.2 260.3)" fill="#1d7322"/>
<ellipse cx="80.9" cy="278.6" rx="1.6" ry="1.0" transform="rotate(168 80.9 278.6)" fill="#b4e86a"/>
<ellipse cx="102.9" cy="231.5" rx="2.9" ry="0.9" transform="rotate(92 102.9 231.5)" fill="#1d7322"/>
<ellipse cx="97.7" cy="230.2" rx="1.9" ry="1.0" transform="rotate(102 97.7 230.2)" fill="#2a8f26"/>
<ellipse cx="78.8" cy="269.6" rx="2.1" ry="1.2" transform="rotate(67 78.8 269.6)" fill="#1d7322"/>
<ellipse cx="92.9" cy="267.1" rx="2.6" ry="0.9" transform="rotate(149 92.9 267.1)" fill="#b4e86a"/>
<ellipse cx="91.8" cy="270.1" rx="3.1" ry="1.2" transform="rotate(158 91.8 270.1)" fill="#6ccc3a"/>
<ellipse cx="90.8" cy="232.2" rx="1.5" ry="0.7" transform="rotate(101 90.8 232.2)" fill="#3aa82c"/>
<ellipse cx="96.8" cy="259.9" rx="2.2" ry="0.9" transform="rotate(5 96.8 259.9)" fill="#6ccc3a"/>
<ellipse cx="94.8" cy="256.5" rx="1.7" ry="0.7" transform="rotate(171 94.8 256.5)" fill="#b4e86a"/>
<ellipse cx="76.3" cy="259.2" rx="2.4" ry="1.0" transform="rotate(55 76.3 259.2)" fill="#3aa82c"/>
<ellipse cx="105.1" cy="228.9" rx="2.8" ry="0.9" transform="rotate(22 105.1 228.9)" fill="#8fdc4c"/>
<ellipse cx="110.1" cy="238.5" rx="2.3" ry="0.9" transform="rotate(118 110.1 238.5)" fill="#b4e86a"/>
<ellipse cx="92.8" cy="238.6" rx="1.6" ry="0.9" transform="rotate(37 92.8 238.6)" fill="#2a8f26"/>
<ellipse cx="88.6" cy="260.5" rx="1.8" ry="1.2" transform="rotate(71 88.6 260.5)" fill="#4fbd30"/>
<ellipse cx="88.1" cy="263.8" rx="1.7" ry="0.9" transform="rotate(164 88.1 263.8)" fill="#1d7322"/>
<ellipse cx="109.5" cy="249.9" rx="1.8" ry="1.0" transform="rotate(43 109.5 249.9)" fill="#8fdc4c"/>
<ellipse cx="72" cy="238" rx="4" ry="1.2" transform="rotate(-30 72 238)" fill="#3aa82c"/>
<ellipse cx="76" cy="232" rx="4" ry="1.2" transform="rotate(-40 76 232)" fill="#3aa82c"/>
<ellipse cx="68" cy="244" rx="4" ry="1.2" transform="rotate(-15 68 244)" fill="#3aa82c"/>
<ellipse cx="80" cy="280" rx="4" ry="1.2" transform="rotate(60 80 280)" fill="#3aa82c"/>
<ellipse cx="90" cy="290" rx="4" ry="1.2" transform="rotate(70 90 290)" fill="#3aa82c"/>
<ellipse cx="74" cy="276" rx="4" ry="1.2" transform="rotate(40 74 276)" fill="#3aa82c"/>
<ellipse cx="76" cy="261" rx="5.500" ry="7" fill="#eaf2e4" opacity=".92"/><ellipse cx="80" cy="254" rx="3" ry="3.500" fill="#dfead2" opacity=".9"/><ellipse cx="94" cy="232" rx="4" ry="3" fill="#d9ecc0" opacity=".8"/>
<ellipse cx="107" cy="226" rx="6.500" ry="6" fill="#e8bfa3"/><ellipse cx="105.500" cy="223" rx="3" ry="3.500" fill="#4fc247"/>
<!-- boutonniere -->
<circle cx="275" cy="163" r="3.500" fill="#f0f4ea"/><path d="M276 166l6 10" stroke="#5aa34a" stroke-width="2"/>
</g>
</g></svg>

</div>
<div class="abs" style="left:640px;top:132px;width:321px;height:321px;border:2.4px solid #19c3d6;border-right:none"></div>

<!-- handles -->
<div class="abs" style="left:635px;top:127px;width:12px;height:12px;border-radius:50%;background:#fff;border:1.5px solid #6b747e"></div>
<div class="abs" style="left:635px;top:445px;width:12px;height:12px;border-radius:50%;background:#fff;border:1.5px solid #6b747e"></div>
<div class="abs" style="left:794px;top:129px;width:18px;height:8px;border-radius:4px;background:#fff;border:1.3px solid #6b747e"></div>
<div class="abs" style="left:794px;top:447px;width:18px;height:8px;border-radius:4px;background:#fff;border:1.3px solid #6b747e"></div>
<div class="abs" style="left:637px;top:283px;width:8px;height:18px;border-radius:4px;background:#fff;border:1.3px solid #6b747e"></div>
<div class="abs" style="left:802.5px;top:455px;width:1px;height:17px;background:#c6ccd3"></div>
<div class="abs" style="left:792.500px;top:471px;width:22px;height:22px;border-radius:50%;background:#fff;border:1px solid #e1e5e9;box-shadow:0 1px 4px rgba(0,0,0,.12)">
<svg viewBox="0 0 24 24" width="16" height="16" style="position:absolute;left:2px;top:2px" fill="none" stroke="#222" stroke-width="2" stroke-linecap="round" stroke-linejoin="round"><path d="M19 12a7 7 0 0 1-12 5M5 12a7 7 0 0 1 12-5"/><path d="M17 3v4h-4M7 21v-4h4"/></svg>
</div>

<!-- floating toolbar -->
<div class="abs" style="left:730.500px;top:91px;width:147px;height:33px;border-radius:8px;background:#fff;border:1px solid #e1e6ea;box-shadow:0 2px 6px rgba(0,0,0,.10)">
<svg class="abs" style="left:13.500px;top:7px" width="17" height="17" viewBox="0 0 24 24" fill="none" stroke="#111" stroke-width="2.2" stroke-linecap="round" stroke-linejoin="round"><path d="M6 2v16h16M2 6h16v16"/><path d="M11 13l3-3" stroke-width="1.3"/></svg>
<svg class="abs" style="left:47.500px;top:7px" width="17" height="17" viewBox="0 0 24 24" fill="none" stroke="#111" stroke-width="2.2" stroke-linecap="round" stroke-linejoin="round"><rect x="3" y="3" width="7" height="7" rx="1.5"/><rect x="14" y="14" width="7" height="7" rx="1.5"/><path d="M15 4h3a2 2 0 0 1 2 2v4m-2-2l2 2 2-2M9 20H6a2 2 0 0 1-2-2v-4m-2 2l2-2 2 2"/></svg>
<svg class="abs" style="left:80.500px;top:7px" width="17" height="17" viewBox="0 0 24 24" fill="none" stroke="#111" stroke-width="2.2" stroke-linecap="round" stroke-linejoin="round"><rect x="3" y="8" width="13" height="13" rx="3"/><path d="M7 4.5h9a4.500 4.500 0 0 1 4.500 4.500v8"/><path d="M9.500 11.500v6M6.500 14.500h6"/></svg>
<svg class="abs" style="left:114.500px;top:7px" width="17" height="17" viewBox="0 0 24 24" fill="#111"><circle cx="4" cy="12" r="2"/><circle cx="12" cy="12" r="2"/><circle cx="20" cy="12" r="2"/></svg>
</div>

<!-- TOP BAR -->
<div id="top">
<svg class="abs" style="left:20px;top:17px" width="19" height="18" viewBox="0 0 24 22" fill="none" stroke="#111" stroke-width="2.2" stroke-linecap="round" stroke-linejoin="round"><path d="M7.500 18H6.500a4.500 4.500 0 0 1-1-8.900A6.500 6.500 0 0 1 18 8.500a4.800 4.800 0 0 1 0 9.500h-1.500"/><path d="M12 19v-8m-3 3l3-3 3 3"/></svg>
<div class="t" style="left:55px;top:18.500px;font-size:14px;color:#1a1c1f;letter-spacing:-0.1px">Untitled image</div>
<svg class="abs" style="left:157px;top:22px" width="10" height="8" viewBox="0 0 10 8" fill="none" stroke="#111" stroke-width="1.800" stroke-linecap="round" stroke-linejoin="round"><path d="M1.500 2l3.500 4 3.500-4"/></svg>

<div class="abs" style="left:340px;top:11px;width:30px;height:30px;border-radius:7px;background:#e7ecf0"></div>
<svg class="abs" style="left:349px;top:19px" width="14" height="16" viewBox="0 0 14 16" fill="none" stroke="#111" stroke-width="1.800" stroke-linejoin="round"><path d="M2.300 1.800L11.600 7.900 6.300 9.300 2.800 13.300z"/></svg>
<svg class="abs" style="left:380px;top:17px" width="16" height="18" viewBox="0 0 16 18" fill="none" stroke="#111" stroke-width="1.500" stroke-linecap="round" stroke-linejoin="round"><path d="M4.500 9.500V3.500a1.200 1.200 0 0 1 2.400 0V8M6.900 8V2.300a1.200 1.200 0 0 1 2.400 0V8M9.300 8V3a1.200 1.200 0 0 1 2.400 0v5.500M11.700 8.500V5a1.200 1.200 0 0 1 2.400 0v6.500c0 3.500-2 5.500-5 5.500-2.500 0-3.800-1-5-3L1.700 10.500c-.6-1 .8-2 1.700-1l1.100 1.500"/></svg>
<svg class="abs" style="left:416px;top:19px" width="15" height="15" viewBox="0 0 15 15" fill="none" stroke="#111" stroke-width="1.800" stroke-linejoin="round"><rect x="1" y="1" width="13" height="13" rx="2"/><path d="M1 5.500h13M9.700 5.500v8.500"/></svg>
<svg class="abs" style="left:439px;top:22px" width="9" height="8" viewBox="0 0 10 8" fill="none" stroke="#111" stroke-width="1.800" stroke-linecap="round" stroke-linejoin="round"><path d="M1.500 2l3.500 4 3.500-4"/></svg>
<div class="t" style="left:467px;top:18px;font-size:13.5px;color:#1a1c1f">43%</div>
<svg class="abs" style="left:510px;top:22px" width="9" height="8" viewBox="0 0 10 8" fill="none" stroke="#111" stroke-width="1.800" stroke-linecap="round" stroke-linejoin="round"><path d="M1.500 2l3.500 4 3.500-4"/></svg>
<div class="abs" style="left:534px;top:18px;width:1px;height:16px;background:#dfe4e9"></div>
<svg class="abs" style="left:550px;top:19px" width="14" height="15" viewBox="0 0 14 15" fill="none" stroke="#111" stroke-width="1.800" stroke-linecap="round" stroke-linejoin="round"><path d="M5 1.500L1.500 5 5 8.500M2 5h6.500a4 4 0 0 1 0 8.500H5"/></svg>
<svg class="abs" style="left:584px;top:19px" width="14" height="15" viewBox="0 0 14 15" fill="none" stroke="#c9d3dc" stroke-width="1.800" stroke-linecap="round" stroke-linejoin="round"><path d="M9 1.500L12.500 5 9 8.500M12 5H5.500a4 4 0 0 0 0 8.500H9"/></svg>

<div class="abs" style="left:782px;top:11px;width:63px;height:30px;border-radius:8px;background:linear-gradient(90deg,#3ba6ef 0%,#12bfe6 45%,#00cbe0 100%);box-shadow:0 1px 4px rgba(40,170,230,.35)"></div>
<div class="t" style="left:782px;top:18px;width:63px;text-align:center;font-size:13.5px;font-weight:bold;color:#fff;letter-spacing:-0.1px">Export</div>
<svg class="abs" style="left:859px;top:17px" width="16" height="18" viewBox="0 0 16 18" fill="none" stroke="#111" stroke-width="1.800" stroke-linecap="round" stroke-linejoin="round"><path d="M8 1.300L1.800 3.600v5.200c0 4 2.700 6.600 6.200 7.900 3.500-1.300 6.200-3.900 6.200-7.900V3.600z"/><path d="M5.300 8.800l2 2 3.500-3.600"/></svg>
<div class="abs" style="left:905px;top:13px;width:26px;height:26px;border-radius:50%;overflow:hidden;background:linear-gradient(90deg,#f0d400 0%,#efd200 38%,#8fb9b0 52%,#4a9dba 68%,#1f7d9e 100%)">
<svg class="abs" style="left:0;top:0" width="26" height="26" viewBox="0 0 26 26"><defs><filter id="avb"><feGaussianBlur stdDeviation=".45"/></filter></defs><g filter="url(#avb)"><path d="M3.500 26c0-7 2-11 6-12.500l2.500-1.500h2l2.500 1c4 1 5.500 5 5.500 13z" fill="#eceee9"/><ellipse cx="12" cy="7.500" rx="3.300" ry="4.300" fill="#e2bfa3"/><path d="M8.500 7c0-3.500 1.500-5.500 4-5.500 2 0 3.500 1.500 3.300 4-1-1.500-2.500-2-4-1.800-1.500.3-2.500 1.500-3.300 3.300z" fill="#5b4433"/><path d="M11 11.500h2.500v3h-2.500z" fill="#dcb497"/><path d="M12.500 17.500l4-4.500c.6-.5 1.300 0 1 .8l-2 4.200c-.5 1.500-2 2.500-3 1.500z" fill="#e0bda2"/><circle cx="15.300" cy="10" r="1" fill="#e9a92a"/></g></svg>
</div>
</div>
</div>

<!-- BOTTOM BAR -->
<div id="bottom">
<svg class="abs" style="left:14px;top:14px" width="16" height="16" viewBox="0 0 24 24" fill="none" stroke="#111" stroke-width="2.400" stroke-linecap="round" stroke-linejoin="round"><rect x="2.500" y="7.500" width="14" height="14" rx="3.500"/><path d="M7 3h10a4.500 4.500 0 0 1 4.500 4.500v9"/><path d="M9.500 11.500v6M6.500 14.500h6"/></svg>
<svg class="abs" style="left:52px;top:15px" width="15" height="15" viewBox="0 0 15 15" fill="none" stroke="#d3dbe3" stroke-width="1.600" stroke-linecap="round" stroke-linejoin="round"><path d="M1 4h13M5 4V2.200a1 1 0 0 1 1-1h3a1 1 0 0 1 1 1V4M2.800 4l.8 8.500a1.500 1.500 0 0 0 1.500 1.300h4.800a1.500 1.500 0 0 0 1.500-1.300L12.200 4"/></svg>
<div class="abs" style="left:82px;top:15px;width:1px;height:15px;background:#dfe4e9"></div>
<svg class="abs" style="left:99px;top:14px" width="17" height="17" viewBox="0 0 17 17" fill="none" stroke="#111" stroke-width="1.700" stroke-linecap="round" stroke-linejoin="round"><path d="M8.500 13.500H3.500a2 2 0 0 1-2-2V3a2 2 0 0 1 2-2h9a2 2 0 0 1 2 2v6"/><path d="M13 10.500v5M10.500 13h5"/></svg>
<div class="t" style="left:121px;top:15px;font-size:14px;color:#1a1c1f;letter-spacing:-0.15px;-webkit-text-stroke:0.3px #1a1c1f">Add page</div>

<svg class="abs" style="left:801px;top:16px" width="8" height="13" viewBox="0 0 8 13" fill="none" stroke="#111" stroke-width="1.800" stroke-linecap="round" stroke-linejoin="round"><path d="M6.500 1.500L1.500 6.500l5 5"/></svg>
<div class="t" style="left:833px;top:15px;font-size:12.5px;color:#1a1c1f;letter-spacing:-0.6px">1/1</div>
<svg class="abs" style="left:871px;top:16px" width="8" height="13" viewBox="0 0 8 13" fill="none" stroke="#c9d3dc" stroke-width="1.800" stroke-linecap="round" stroke-linejoin="round"><path d="M1.500 1.500l5 5-5 5"/></svg>
<div class="abs" style="left:900px;top:15px;width:1px;height:15px;background:#dfe4e9"></div>
<svg class="abs" style="left:915px;top:14px" width="17" height="17" viewBox="0 0 17 17" fill="none" stroke="#111" stroke-width="1.900" stroke-linecap="round" stroke-linejoin="round"><rect x="1.500" y="7" width="13.500" height="8.500" rx="1.500"/><path d="M5.500 4L8.300 1.500 11 4"/></svg>
</div>

<!-- RIGHT RAIL -->
<div class="abs" style="left:1219px;top:60px;width:52px;height:214px;border-radius:8px;background:#fff;box-shadow:0 1px 4px rgba(0,0,0,.05)"></div>
<div class="abs" style="left:1224px;top:63px;width:42px;height:49px;border-radius:6px;background:#e3e7eb"></div>
<div class="abs" style="left:1220px;top:59px;width:50px;height:57px;border:4px solid #fe0000"></div>
<svg class="abs" style="left:1237px;top:72px" width="17" height="17" viewBox="0 0 17 17" fill="none" stroke="#1a1c1f" stroke-width="1.500" stroke-linecap="round" stroke-linejoin="round"><path d="M7.800 1.200L9.620 5.290 14.080 5.760 10.750 8.760 11.680 13.140 7.800 10.900 3.920 13.140 4.850 8.760 1.520 5.760 5.980 5.290z"/><path d="M11.300 11.300l3.700 4.200"/></svg>
<div class="t" style="left:1220px;top:93px;width:50px;text-align:center;font-size:9.5px;color:#2a2d31">Effects</div>

<svg class="abs" style="left:1237px;top:125px" width="17" height="17" viewBox="0 0 17 17" fill="none" stroke="#4a5461" stroke-width="1.500" stroke-linecap="round"><path d="M1 5h8M13 5h3M1 12h3M8 12h8"/><circle cx="11" cy="5" r="2"/><circle cx="6" cy="12" r="2"/></svg>
<div class="t" style="left:1220px;top:146px;width:50px;text-align:center;font-size:9.5px;color:#8b919b">Adjust</div>

<svg class="abs" style="left:1237px;top:177px" width="17" height="17" viewBox="0 0 17 17" fill="none" stroke="#4a5461" stroke-width="1.500" stroke-linecap="round" stroke-linejoin="round"><path d="M8.500 1.500C5.500 5 3 7.500 3 10.500a5.500 5.500 0 0 0 11 0c0-3-2.500-5.500-5.500-9z"/><path d="M8.500 7v6.500a3 3 0 0 0 2.800-3c0-1.300-1.300-2.500-2.800-3.500z" stroke-width="1"/></svg>
<div class="t" style="left:1220px;top:198px;width:50px;text-align:center;font-size:9.5px;color:#8b919b">Opacity</div>

<svg class="abs" style="left:1237px;top:229px" width="17" height="17" viewBox="0 0 17 17" fill="none" stroke="#4a5461" stroke-width="1.500" stroke-linecap="round" stroke-linejoin="round"><path d="M1.500 5V3.500a2 2 0 0 1 2-2H5M12 1.500h1.500a2 2 0 0 1 2 2V5M15.500 12v1.500a2 2 0 0 1-2 2H12M5 15.500H3.500a2 2 0 0 1-2-2V12M7.500 1.500h2M7.500 15.500h2M1.500 7.500v2M15.500 7.500v2"/><rect x="5.700" y="5.700" width="5.600" height="5.600" rx="1.500" fill="#c5cad1"/></svg>
<div class="t" style="left:1220px;top:251px;width:50px;text-align:center;font-size:9.5px;color:#8b919b">Arrange</div>

<!-- FILTERS PANEL -->
<div class="abs" style="left:961.500px;top:62px;width:252.500px;height:497px;border-radius:8px;background:#fff;box-shadow:0 2px 8px rgba(0,0,0,.10)"></div>
<div class="abs" id="fp" style="left:964px;top:63px;width:250px;height:496px;overflow:hidden">
 <svg class="abs" style="left:20px;top:15px" width="9" height="12" viewBox="0 0 9 12" fill="none" stroke="#1a1c1f" stroke-width="1.900" stroke-linecap="round" stroke-linejoin="round"><path d="M7 1.500L2 6l5 4.500"/></svg>
 <div class="t" style="left:36px;top:12px;font-size:14.500px;font-weight:bold;color:#1a1c1f;letter-spacing:-0.1px">Filters</div>
 <svg class="abs" style="left:194px;top:14px" width="13" height="13" viewBox="0 0 13 13" fill="none" stroke="#8b929c" stroke-width="1.200" stroke-linecap="round" stroke-linejoin="round"><path d="M2.300 4.200A5 5 0 1 1 1.500 7"/><path d="M2 1.300v3.200h3.200"/></svg>
 <svg class="abs" style="left:219px;top:14px" width="13" height="13" viewBox="0 0 13 13" fill="none" stroke="#8b929c" stroke-width="1.200" stroke-linecap="round"><path d="M1.500 1.500l10 10M11.500 1.500l-10 10"/></svg>
 <div class="abs" style="left:13px;top:43px;width:221px;height:1px;background:#e8ecef"></div>
 <div class="t" style="left:13px;top:59.500px;font-size:13px;color:#1f2226;letter-spacing:0.3px;-webkit-text-stroke:0.2px #1f2226">Quality</div>

 <div class="abs" style="left:11px;top:84px;width:73px;height:73px;border-radius:10px;border:1.700px solid #2ac6e0"></div>
 <div class="th" style="left:13.300px;top:86px"><svg viewBox="0 0 68 68" width="100%" height="100%" preserveAspectRatio="none"><defs><linearGradient id="nw" x1="0" y1="0" x2="1" y2="0"><stop offset="0" stop-color="#ebdfcf"/><stop offset=".45" stop-color="#e6d9c9"/><stop offset=".6" stop-color="#cfcdd0"/><stop offset=".75" stop-color="#bcc0c9"/><stop offset=".84" stop-color="#b4b9c3"/></linearGradient><filter id="nf"><feGaussianBlur stdDeviation=".5"/></filter><filter id="nf3"><feGaussianBlur stdDeviation="2.500"/></filter></defs>
<rect width="68" height="68" fill="url(#nw)"/><path d="M0 30l22-8 4 46H0z" fill="#dccdb9" opacity=".5" filter="url(#nf3)"/>
<rect x="57" width="11" height="68" fill="#dcd6cd"/><rect x="56.300" width="1.400" height="68" fill="#a9aab0" opacity=".7"/>
<g filter="url(#nf)"><path d="M9.500 61.500l30-2.500 15 .5v4l-15 4.500H9.500z" fill="#f4f1ec"/><path d="M9.500 63.500l30 .5 15-2v6H9.500z" fill="#e7d9bf"/>
<path d="M12.700 27l21.600-.4.400 30.400-20 2.500z" fill="#e7d4b4"/><path d="M13.200 27.500l20.500-.5" stroke="#f3e6cc" stroke-width="1"/><path d="M17.800 31.200l13.300-.4.300 22.500-12.800 2z" fill="#c3c1b7"/><path d="M19 40l11-1v6l-11 1z" fill="#dcdad2" opacity=".8"/><path d="M19.500 47l10 -1 .3 6-9.500 1.500z" fill="#a9b5b8" opacity=".7"/>
<path d="M34.500 47h4.500v3c2 1 3 3 3 6.500 0 4-1.500 7-4.800 7s-4.800-3-4.800-7c0-3.500 1-5.500 2.600-6.500z" fill="#9db1ad"/>
<path d="M36.500 47c0-4-.5-6-1-7.500M37 47c1-4 3-8 5.500-11" stroke="#6f9a4c" stroke-width="1.200" fill="none"/><ellipse cx="35.500" cy="41.500" rx="1.700" ry="2.200" fill="#cf3b2e"/><ellipse cx="42.800" cy="35.800" rx="1.700" ry="2.300" fill="#eba06c"/><ellipse cx="38" cy="39.500" rx="1.200" ry="1.800" fill="#8a4a3a"/>
<path d="M26 54l1.500 5.500 1.500-5.500M27.500 59.500v3" stroke="#f2f4f4" stroke-width=".9" fill="none" opacity=".9"/></g></svg></div>
 <div class="th" style="left:89.300px;top:86px"><svg viewBox="0 0 68 68" width="100%" height="100%" preserveAspectRatio="none"><defs><linearGradient id="sf0f1f3" x1="0" y1="0" x2="0" y2="1"><stop offset="0" stop-color="#f0f1f3"/><stop offset="1" stop-color="#eaedee"/></linearGradient><linearGradient id="df0f1f3" x1="0" y1="0" x2="0" y2="1"><stop offset="0" stop-color="#f4e9d6"/><stop offset="1" stop-color="#f0e0c6"/></linearGradient><filter id="ff0f1f3"><feGaussianBlur stdDeviation=".45"/></filter></defs>
<rect width="68" height="43" fill="url(#sf0f1f3)"/><rect y="41.500" width="68" height="27" fill="url(#df0f1f3)"/>
<g filter="url(#ff0f1f3)"><g stroke="#b8996c" stroke-width="1.300" fill="none"><path d="M14.500 38.500l-.7 10M19 44v4.500M31.500 39l-.5 9M36.500 40.500v7.500"/></g>
<g fill="#7f8345"><path d="M8.500 38c2-2.500 4.500-3.500 6-2.800 1.500-1.200 4-1.200 6 .8-2-.3-3.500.2-4.500 1.200 1 .6 1.800 1.800 2 3.200-1.200-1.500-2.500-2.200-3.800-2-1.200-.4-2.800.3-3.800 2 0-1.500.5-2.500 1.500-3.200-1.200-.3-2.400 0-3.400.8z"/><path d="M25.500 38.500c2-2.500 4.500-3.500 6-2.800 1.500-1 3.500-.8 5 .8 1.500-.6 3 0 4 1.500-1.500-.4-2.700 0-3.500.8.600.8.800 1.800.6 2.800-.8-1.300-1.800-2-3-2-1-.8-2.500-.6-3.800 1 .1-1.200.5-2 1.200-2.600-1.300-.6-2.900-.4-4.200.8.200-1 .800-1.800 1.600-2.200-1.300-.1-2.700.5-3.900 1.900z"/><path d="M16.500 43.500c1-1.600 2.500-2.200 3.500-1.800 1.200-.5 2.500 0 3.300 1.300-1.100-.3-2-.1-2.600.5.400.6.500 1.300.3 2-.6-1-1.400-1.500-2.300-1.400-.9-.2-1.700.3-2.300 1.300 0-1 .3-1.700 1-2.200-.3 0-.6.100-.9.300z"/></g>
<g fill="#f3ece0"><rect x="21" y="44.500" width="7" height="4"/><rect x="33" y="43.500" width="4" height="5"/><rect x="38" y="44" width="5" height="5"/><rect x="52" y="41" width="8" height="6"/><rect x="59" y="42" width="7" height="5"/></g><rect x="62.500" y="42.500" width="5.500" height="4.500" fill="#c9a77d" opacity=".65"/><rect x="55" y="43" width="2" height="3" fill="#c9a77d" opacity=".6"/><rect x="40" y="45" width="2" height="3" fill="#c9a77d" opacity=".5"/>
<ellipse cx="27" cy="50" rx="17" ry="1.300" fill="#c9a77d" opacity=".3"/></g></svg></div>
 <div class="th" style="left:165.800px;top:86px"><svg viewBox="0 0 68 68" width="100%" height="100%" preserveAspectRatio="none"><defs><linearGradient id="sd3dadc" x1="0" y1="0" x2="0" y2="1"><stop offset="0" stop-color="#d3dadc"/><stop offset="1" stop-color="#d8dedd"/></linearGradient><linearGradient id="dd3dadc" x1="0" y1="0" x2="0" y2="1"><stop offset="0" stop-color="#eadcc4"/><stop offset="1" stop-color="#e3d1b3"/></linearGradient><filter id="fd3dadc"><feGaussianBlur stdDeviation=".45"/></filter></defs>
<rect width="68" height="43" fill="url(#sd3dadc)"/><rect y="41.500" width="68" height="27" fill="url(#dd3dadc)"/>
<g filter="url(#fd3dadc)"><g stroke="#b8996c" stroke-width="1.300" fill="none"><path d="M14.500 38.500l-.7 10M19 44v4.500M31.500 39l-.5 9M36.500 40.500v7.500"/></g>
<g fill="#6a6a35"><path d="M8.500 38c2-2.500 4.500-3.500 6-2.800 1.500-1.200 4-1.200 6 .8-2-.3-3.500.2-4.500 1.200 1 .6 1.800 1.800 2 3.200-1.200-1.500-2.500-2.200-3.800-2-1.200-.4-2.800.3-3.800 2 0-1.500.5-2.500 1.500-3.200-1.200-.3-2.400 0-3.400.8z"/><path d="M25.500 38.500c2-2.500 4.500-3.500 6-2.800 1.500-1 3.500-.8 5 .8 1.500-.6 3 0 4 1.500-1.500-.4-2.700 0-3.500.8.600.8.800 1.800.6 2.800-.8-1.300-1.800-2-3-2-1-.8-2.500-.6-3.800 1 .1-1.200.5-2 1.200-2.600-1.300-.6-2.900-.4-4.200.8.200-1 .800-1.800 1.600-2.200-1.300-.1-2.700.5-3.900 1.900z"/><path d="M16.500 43.500c1-1.600 2.500-2.200 3.500-1.800 1.200-.5 2.500 0 3.300 1.300-1.100-.3-2-.1-2.600.5.400.6.500 1.300.3 2-.6-1-1.400-1.500-2.300-1.400-.9-.2-1.700.3-2.300 1.300 0-1 .3-1.700 1-2.200-.3 0-.6.100-.9.300z"/></g>
<g fill="#efe7da"><rect x="21" y="44.500" width="7" height="4"/><rect x="33" y="43.500" width="4" height="5"/><rect x="38" y="44" width="5" height="5"/><rect x="52" y="41" width="8" height="6"/><rect x="59" y="42" width="7" height="5"/></g><rect x="62.500" y="42.500" width="5.500" height="4.500" fill="#c9a77d" opacity=".65"/><rect x="55" y="43" width="2" height="3" fill="#c9a77d" opacity=".6"/><rect x="40" y="45" width="2" height="3" fill="#c9a77d" opacity=".5"/>
<ellipse cx="27" cy="50" rx="17" ry="1.300" fill="#c9a77d" opacity=".3"/></g></svg></div>
 <div class="lb" style="left:13px;top:159px">Natural</div>
 <div class="lb" style="left:89.300px;top:159px">Apricot</div>
 <div class="lb" style="left:165.800px;top:159px">Walnut</div>

 <div class="abs" style="left:42px;top:177px;width:10px;height:10px;background:#f1f4f7;transform:rotate(45deg)"></div>
 <div class="abs" style="left:13px;top:181px;width:221px;height:79px;border-radius:7px;background:#f1f4f7"></div>
 <div class="t" style="left:28px;top:198px;font-size:13px;color:#a9afb8;letter-spacing:0.2px">Intensity</div>
 <div class="abs" style="left:28px;top:229px;width:104px;height:2px;border-radius:1px;background:#5b6a79"></div>
 <div class="abs" style="left:129px;top:223.500px;width:13px;height:13px;border-radius:50%;background:#fff;border:1px solid #8f9aa6;box-shadow:0 1px 2px rgba(0,0,0,.15)"></div>
 <div class="abs" style="left:146.500px;top:214.500px;width:73px;height:29.500px;border-radius:7px;background:#e4eaee"></div>
 <div class="t" style="left:159px;top:221.500px;font-size:13px;color:#2a2d31;letter-spacing:-0.4px">100</div>

 <div class="th" style="left:13.300px;top:268px"><svg viewBox="0 0 68 68" width="100%" height="100%" preserveAspectRatio="none"><defs><linearGradient id="sbad0d3" x1="0" y1="0" x2="0" y2="1"><stop offset="0" stop-color="#bad0d3"/><stop offset="1" stop-color="#c8d9d6"/></linearGradient><linearGradient id="dbad0d3" x1="0" y1="0" x2="0" y2="1"><stop offset="0" stop-color="#e0cfae"/><stop offset="1" stop-color="#d9c39b"/></linearGradient><filter id="fbad0d3"><feGaussianBlur stdDeviation=".45"/></filter></defs>
<rect width="68" height="43" fill="url(#sbad0d3)"/><rect y="41.500" width="68" height="27" fill="url(#dbad0d3)"/>
<g filter="url(#fbad0d3)"><g stroke="#b8996c" stroke-width="1.300" fill="none"><path d="M14.500 38.500l-.7 10M19 44v4.500M31.500 39l-.5 9M36.500 40.500v7.500"/></g>
<g fill="#55602f"><path d="M8.500 38c2-2.500 4.500-3.500 6-2.800 1.500-1.200 4-1.200 6 .8-2-.3-3.500.2-4.500 1.200 1 .6 1.800 1.800 2 3.200-1.200-1.500-2.500-2.200-3.800-2-1.200-.4-2.800.3-3.800 2 0-1.500.5-2.500 1.500-3.200-1.200-.3-2.400 0-3.400.8z"/><path d="M25.500 38.500c2-2.500 4.500-3.500 6-2.800 1.500-1 3.500-.8 5 .8 1.500-.6 3 0 4 1.500-1.500-.4-2.700 0-3.500.8.600.8.800 1.800.6 2.800-.8-1.300-1.800-2-3-2-1-.8-2.500-.6-3.800 1 .1-1.200.5-2 1.200-2.600-1.300-.6-2.900-.4-4.200.8.200-1 .800-1.800 1.600-2.200-1.300-.1-2.700.5-3.900 1.900z"/><path d="M16.500 43.500c1-1.600 2.500-2.200 3.500-1.800 1.200-.5 2.500 0 3.300 1.300-1.100-.3-2-.1-2.600.5.400.6.500 1.300.3 2-.6-1-1.400-1.500-2.300-1.400-.9-.2-1.700.3-2.300 1.300 0-1 .3-1.700 1-2.200-.3 0-.6.100-.9.300z"/></g>
<g fill="#efe6d2"><rect x="21" y="44.500" width="7" height="4"/><rect x="33" y="43.500" width="4" height="5"/><rect x="38" y="44" width="5" height="5"/><rect x="52" y="41" width="8" height="6"/><rect x="59" y="42" width="7" height="5"/></g><rect x="62.500" y="42.500" width="5.500" height="4.500" fill="#c9a77d" opacity=".65"/><rect x="55" y="43" width="2" height="3" fill="#c9a77d" opacity=".6"/><rect x="40" y="45" width="2" height="3" fill="#c9a77d" opacity=".5"/>
<ellipse cx="27" cy="50" rx="17" ry="1.300" fill="#c9a77d" opacity=".3"/></g></svg></div>
 <div class="th" style="left:89.300px;top:268px"><svg viewBox="0 0 68 68" width="100%" height="100%" preserveAspectRatio="none"><defs><radialGradient id="lg" cx=".4" cy=".5" r=".75"><stop offset="0" stop-color="#b3b0ad"/><stop offset=".7" stop-color="#a6a3a1"/><stop offset="1" stop-color="#999695"/></radialGradient><filter id="sf"><feGaussianBlur stdDeviation=".5"/></filter></defs>
<rect width="68" height="68" fill="url(#lg)"/><g filter="url(#sf)">
<path d="M30 63l10-3v8H29z" fill="#e9e2d3"/>
<path d="M33 16c2 4 6 6 8 6l7-1c.5 3 1.500 5.500 3.500 7l-14 3c-1-3-2-6-4.500-8z" fill="#e3c8b9"/>
<path d="M27 9c-1 3-1.200 6-.6 8.500l-1.200 3 1.800.8.300 3c1 2 3.500 2.200 6 1.200 2-1 4-3 5-6l1-8z" fill="#e8d0c2"/>
<path d="M25 9c1.500-5 6-9 13-9 3 0 5 .5 7 1.500 2-2 5-1.500 6 .5 1 2 0 4.500-2 5.500.5 3-.5 6-2 8.500-1.500 1-3 .5-4-.5-1-3-2-5-4-6-1 1-2 1-3 0-2-2-5-2.500-8-1.500-1.500.5-2.500 1-3 1z" fill="#16181d"/>
<path d="M37 30c3-2.500 9-4 15-3 3 2 4.500 5 5 9l1.500 32H31c-1-4-.5-8 .5-11-1.500-5-1-9 .5-13 1-6 2.500-11 5-14z" fill="#f3f3f3"/>
<path d="M38 34c-3 5-5 12-5.500 18 1 4 3 7 6 9M52 30c2 8 3 20 2 36M44 33c-1 10 0 22 3 32" stroke="#d6d7db" stroke-width="1.200" fill="none"/>
<path d="M19 40c1-1.500 2.500-1.500 3.500 0l1.500 3c1-2.500 3.500-4 6-3.500 1.500.5 2 2 1.500 3.500l-1 4c.5 3 0 6-1.500 8.500l-5-1.500c-3-3-5-8-5-14z" fill="#e9d3c6"/><path d="M24 44c2 1 4 1 6 0M23.500 48c2 1 4.500 1 6.500 0" stroke="#caa999" stroke-width=".8" fill="none"/>
<path d="M27 55l6 4-1.500 3-6-3.500z" fill="#e6cdbf"/></g></svg></div>
 <div class="lb" style="left:13px;top:341px">Coconut</div>
 <div class="lb" style="left:89.300px;top:341px">Light Skin</div>

 <div class="abs" style="left:13px;top:370px;width:221px;height:1px;background:#e8ecef"></div>
 <div class="t" style="left:13px;top:385.500px;font-size:13px;color:#1f2226;letter-spacing:0.2px;-webkit-text-stroke:0.3px #1f2226">Delicacy</div>
 <div class="th" style="left:13.300px;top:412px"><svg viewBox="0 0 68 68" width="100%" height="100%" preserveAspectRatio="none">
<rect width="68" height="68" fill="#f1efef"/><rect width="68" height="30" fill="#f3f1f2"/>
<ellipse cx="30" cy="58" rx="42" ry="27" fill="#5c8640"/><ellipse cx="26" cy="52" rx="30" ry="10" fill="#6b9650" opacity=".7"/>
<ellipse cx="32" cy="47.500" rx="24.500" ry="12.500" fill="#dfe1de"/><ellipse cx="32" cy="46.500" rx="24.500" ry="12" fill="#fbfbfa"/>
<path d="M26.700 35.500c0-4.500 18.200-4.500 18.200 0v10c0 4.500-18.200 4.500-18.200 0z" fill="#f2c640"/><ellipse cx="35.800" cy="35" rx="9" ry="4.300" fill="#f3bf45"/><ellipse cx="36" cy="34.500" rx="6.500" ry="2.800" fill="#e7a236"/><ellipse cx="37.500" cy="34.800" rx="2.200" ry="1.300" fill="#f3ecd2"/><circle cx="34" cy="35" r="1.100" fill="#6c7a55"/>
<path d="M26.700 39.500c3 2.300 15 2.300 18.200 0M26.700 43c3 2.300 15 2.300 18.200 0" stroke="#e0a52e" stroke-width=".8" fill="none"/>
<circle cx="20" cy="47.500" r="1.800" fill="#4b4a33"/><circle cx="22.500" cy="46.500" r="1.300" fill="#d5b53a"/><circle cx="17.500" cy="50" r="1" fill="#6a7a3a"/></svg></div>
 <div class="th" style="left:89.300px;top:412px"><svg viewBox="0 0 68 68" width="100%" height="100%" preserveAspectRatio="none"><defs><linearGradient id="ccbbdb3" x1="0" y1="0" x2="1" y2="0"><stop offset="0" stop-color="#cbbdb3"/><stop offset="1" stop-color="#d6cbc2"/></linearGradient><linearGradient id="bcbbdb3" x1="0" y1="0" x2="1" y2="0"><stop offset="0" stop-color="#d7ad62"/><stop offset="1" stop-color="#e3c382"/></linearGradient></defs>
<rect width="68" height="68" fill="url(#ccbbdb3)"/><path d="M0 38h40c12 0 22 4 28 9v21H0z" fill="#ebe3da"/><rect y="33" width="36" height="6" fill="#ebe3da" opacity=".8"/>
<path d="M10 52l46-1 3 6H8z" fill="#efe8df"/><path d="M8 57h51v1.500H8z" fill="#cbbfb2" opacity=".7"/>
<path d="M17 28h32v22c0 4-32 4-32 0z" fill="url(#bcbbdb3)"/>
<path d="M16 27c0-7 34-7 34 0v8c-1 4-3 3-4 0-1-2-3-1-3 2-1 6-4 6-5 0 0-3-3-3-4-1-1 3-3 2-4-1-1-2-3-2-4 2 0 9-4 9-4 2-1-5-3-2-4-1-1 2-2 0-2-3z" fill="#f6f3ec"/>
<ellipse cx="33" cy="24" rx="16" ry="4.500" fill="#faf8f3"/>
<circle cx="27.500" cy="21.500" r="2.800" fill="#e8822a"/><circle cx="31" cy="19" r="2.400" fill="#5d7a3e"/><circle cx="34.500" cy="21" r="2.400" fill="#8a938c"/><circle cx="30.500" cy="22.500" r="1.800" fill="#f09a2a"/></svg></div>
 <div class="th" style="left:165.800px;top:412px"><svg viewBox="0 0 68 68" width="100%" height="100%" preserveAspectRatio="none"><defs><linearGradient id="ce0cfbc" x1="0" y1="0" x2="1" y2="0"><stop offset="0" stop-color="#e0cfbc"/><stop offset="1" stop-color="#ead9c6"/></linearGradient><linearGradient id="be0cfbc" x1="0" y1="0" x2="1" y2="0"><stop offset="0" stop-color="#efc132"/><stop offset="1" stop-color="#f5d460"/></linearGradient></defs>
<rect width="68" height="68" fill="url(#ce0cfbc)"/><path d="M0 38h40c12 0 22 4 28 9v21H0z" fill="#f4ebdc"/><rect y="33" width="36" height="6" fill="#f4ebdc" opacity=".8"/>
<path d="M10 52l46-1 3 6H8z" fill="#f6efe2"/><path d="M8 57h51v1.500H8z" fill="#cbbfb2" opacity=".7"/>
<path d="M17 28h32v22c0 4-32 4-32 0z" fill="url(#be0cfbc)"/>
<path d="M16 27c0-7 34-7 34 0v8c-1 4-3 3-4 0-1-2-3-1-3 2-1 6-4 6-5 0 0-3-3-3-4-1-1 3-3 2-4-1-1-2-3-2-4 2 0 9-4 9-4 2-1-5-3-2-4-1-1 2-2 0-2-3z" fill="#f6f3ec"/>
<ellipse cx="33" cy="24" rx="16" ry="4.500" fill="#faf8f3"/>
<circle cx="27.500" cy="21.500" r="2.800" fill="#e8822a"/><circle cx="31" cy="19" r="2.400" fill="#5d7a3e"/><circle cx="34.500" cy="21" r="2.400" fill="#8a938c"/><circle cx="30.500" cy="22.500" r="1.800" fill="#f09a2a"/></svg></div>
 <div class="lb" style="left:13px;top:485px">Snack</div>
 <div class="lb" style="left:89.300px;top:485px">Dark Brown</div>
 <div class="lb" style="left:165.800px;top:485px">Miso</div>
</div>
<div class="abs" style="left:964px;top:64px;width:250px;height:495px;border:4px solid #fe0000"></div>

<!-- LEFT RAIL -->
<div id="rail">
<svg class="abs" style="left:22px;top:16px" width="26" height="21" viewBox="0 0 26 21" fill="none" stroke="#fff" stroke-width="3" stroke-linejoin="round" stroke-linecap="butt"><path d="M25.300 2.300L4.200 15.200Q2.400 17.900 5.500 17.900H18.500Q21.200 17.900 19.600 15.300"/><path d="M25.300 18.500L4.200 5.600Q2.400 2.900 5.500 2.900H18.500Q21.200 2.900 19.600 5.500"/></svg>
<div class="abs" style="left:24px;top:53px;width:23px;height:1px;background:#2c2d30"></div>

<div class="ri" style="top:70px"><svg viewBox="0 0 20 20" fill="none" stroke="#9aa3ad" stroke-width="1.600" stroke-linecap="round"><rect x="1.800" y="2.300" width="9.500" height="15.400" rx="2"/><path d="M14.500 4.500v11M17.800 6.500v7"/></svg><span>Templates</span></div>

<div class="abs" style="left:8px;top:123px;width:53px;height:54px;border-radius:10px;background:radial-gradient(circle at 85% 10%,#1c3a52 0%,#1d2a36 45%,#1f2226 100%)"></div>
<div class="ri" style="top:132px;color:#fff;font-weight:bold;font-size:10.500px;letter-spacing:-0.3px"><svg viewBox="0 0 20 20" fill="none" stroke="#fff" stroke-width="1.700" stroke-linecap="round" stroke-linejoin="round"><g transform="translate(1.500,2)"><path d="M14.800 1.200C9.500 2.500 5.500 6.500 4 10l2.500 2c4-1.500 7.500-6 8.300-10.800z"/><path d="M4 10c-2 0-2.800 1.500-2.800 4.800 3.300 0 5.100-.8 5.300-2.800"/><path d="M6 2.500C4.500 1 2.500 1.200 1.800 2.800 1 4.500 2.500 6 3.500 7"/><path d="M13 8.500c2 1.500 2 4 .5 5.300-1.500 1.200-3 .7-4-.3"/></g></svg><span>Design</span></div>

<div class="ri" style="top:194px"><svg viewBox="0 0 20 20" fill="none" stroke="#9aa3ad" stroke-width="1.600" stroke-linecap="round" stroke-linejoin="round"><path d="M6.500 16H5.500a4 4 0 0 1-.9-7.900A5.600 5.600 0 0 1 15.500 7a4.300 4.300 0 0 1 0 9h-2"/><path d="M10 17v-7m-2.700 2.700L10 10l2.700 2.700"/></svg><span>Upload</span></div>

<div class="ri" style="top:256px"><svg viewBox="0 0 20 20" fill="none" stroke="#9aa3ad" stroke-width="1.600" stroke-linecap="round" stroke-linejoin="round"><path d="M3 5V2.500h14V5M10 2.500v15M7 17.500h6"/></svg><span>Text</span></div>

<div class="ri" style="top:318px"><svg viewBox="0 0 20 20" fill="none" stroke="#9aa3ad" stroke-width="1.600" stroke-linecap="round" stroke-linejoin="round"><path d="M8.300 3.300A5 5 0 0 0 5 12.200"/><path d="M11.300 2.800h4.200a1.500 1.500 0 0 1 1.500 1.500V8.500"/><path d="M11.500 8L17.300 17.300H5.700z"/></svg><span>Shapes</span></div>

<div class="ri" style="top:380px"><svg viewBox="0 0 20 20" fill="none" stroke="#9aa3ad" stroke-width="1.600" stroke-linecap="round" stroke-linejoin="round"><rect x="2.500" y="2.500" width="15" height="15" rx="2.500"/><path d="M2.500 14l4-4 6 6.500"/><circle cx="12.500" cy="7.500" r="1.400"/></svg><span>Photos</span></div>

<div class="ri" style="top:442px"><svg viewBox="0 0 20 20" fill="none" stroke="#9aa3ad" stroke-width="1.600" stroke-linecap="round" stroke-linejoin="round"><path d="M11 2.600A7.500 7.500 0 1 0 17.400 9"/><path d="M11 2.600C10.500 6.500 13.500 9.500 17.400 9"/><path d="M11 2.600A8.500 8.500 0 0 1 17.400 9" stroke-width="1.100"/></svg><span>Stickers</span></div>

<div class="abs" style="left:0;top:535px;width:70px;height:75px;background:linear-gradient(180deg,rgba(16,16,18,0) 0%,rgba(16,16,18,1) 75%);z-index:0"></div>
<div class="ri" style="top:504px"><svg viewBox="0 0 20 20" fill="none" stroke="#9aa3ad" stroke-width="1.600" stroke-linecap="round" stroke-linejoin="round"><rect x="2.500" y="2.500" width="15" height="15" rx="2.500"/><rect x="6.500" y="6.500" width="7" height="7" rx="1.500"/></svg><span>Frames</span></div>
<div class="ri" style="top:565px"><svg viewBox="0 0 20 20" fill="none" stroke="#3b3e43" stroke-width="1.600" stroke-linecap="round" stroke-linejoin="round"><rect x="2.500" y="2.500" width="15" height="15" rx="2"/><path d="M8 2.500v15M8 9.500h9.500"/></svg></div>
<div class="abs" style="left:69px;top:0;width:1px;height:610px;background:rgba(255,255,255,.05)"></div>
</div>

<!-- LEFT PANEL -->
<div id="panel">
<div class="chip" style="left:16px;width:34px;background:#27282b;border:1px solid #46474b;color:#fff;font-weight:bold;line-height:26px">All</div>
<div class="chip" style="left:56px;width:60px">modern</div>
<div class="chip" style="left:122px;width:43px">cool</div>
<div class="chip" style="left:171px;width:43px;border-radius:8px 0 0 8px">cute</div><div class="chip" style="left:213px;width:6px;border-radius:0"></div>
<div class="abs" style="left:195px;top:12px;width:28px;height:28px;background:linear-gradient(90deg,rgba(15,15,17,0) 0%,#0f0f11 85%)"></div>
<div class="chip" style="left:228px;width:26px"><svg width="10" height="8" viewBox="0 0 10 8" fill="none" stroke="#b9bcc2" stroke-width="1.500" stroke-linecap="round" stroke-linejoin="round" style="position:absolute;left:8px;top:9px"><path d="M1.500 1.800l3.500 3.700 3.500-3.700"/></svg></div>

<div class="h1" style="top:52px">Fonts</div>
<div class="va" style="top:53px">View all</div>

<div class="fcard" style="left:16px;width:96px">
 <div class="t" style="left:7px;top:20px;font-size:17px;letter-spacing:0.1px;-webkit-text-stroke:0.4px #fff">Guti–Bo...</div>
 <div class="t" style="left:7px;top:40px;font-size:12.500px;letter-spacing:-0.2px;transform:scale(0.840,1.350);transform-origin:0 0">BEYOND PRO...</div>
 <div class="t" style="left:7px;top:60px;font-size:11px;letter-spacing:0.25px">Anta-Regular</div>
</div>
<div class="fcard" style="left:119px;width:96px">
 <div class="t" style="left:8px;top:21px;font-size:17px;font-weight:bold;letter-spacing:0.2px">Tenada-...</div>
 <div class="t" style="left:9px;top:41px;font-size:14px;color:#d9dadc;letter-spacing:-0.2px">Zacbel X-E...</div>
 <div class="t" style="left:8px;top:61px;font-size:11px;color:#e5e6e8">Stilu-Regular</div>
</div>
<div class="fcard" style="left:222px;width:27px;border-radius:8px 0 0 8px">
 <div class="t" style="left:7px;top:19px;font-size:19px;font-weight:bold">GU</div>
 <div class="t" style="left:7px;top:41px;font-size:13px;font-weight:bold">D</div>
 <div class="t" style="left:7px;top:61px;font-size:9px;font-weight:bold">Ham</div>
</div>
<div class="arrow" style="left:231.500px;top:120px"><svg width="7" height="9" viewBox="0 0 7 9" fill="none" stroke="#b0b3b8" stroke-width="1.400" stroke-linecap="round" stroke-linejoin="round" style="position:absolute;left:7px;top:5px"><path d="M1.500 1l3.500 3.500L1.500 8"/></svg></div>

<div class="h1" style="top:200px">Colors</div>
<div class="h2" style="top:233px">Recommended</div>
<div class="va" style="top:233px">View all</div>

<div class="ccard" style="left:16px;width:96px;background:#e9ddd2">
 <div class="t" style="left:7px;top:17px;font-size:26px;font-weight:bold;color:#5b361c;letter-spacing:-0.5px">Aa</div>
 <div class="sw"><i style="background:#d9b389"></i><i style="background:#b97f45"></i><i style="background:#7f4d22"></i><i style="background:#55331d"></i></div>
</div>
<div class="ccard" style="left:119px;width:96px;background:#998cee">
 <div class="t" style="left:7px;top:17px;font-size:26px;font-weight:bold;color:#f5efd9;letter-spacing:-0.5px">Aa</div>
 <div class="sw"><i style="background:#4b4766"></i><i style="background:#41d6ae"></i><i style="background:#9bdcfd"></i><i style="background:#f6f0da"></i></div>
</div>
<div class="ccard" style="left:222px;width:27px;background:#243b8c;border-radius:8px 0 0 8px">
 <div class="t" style="left:7px;top:17px;font-size:26px;font-weight:bold;color:#fff;letter-spacing:-0.5px">Aa</div>
 <div class="sw" style="width:60px"><i style="background:#5a7bb3"></i></div>
</div>
<div class="arrow" style="left:231.500px;top:298px"><svg width="7" height="9" viewBox="0 0 7 9" fill="none" stroke="#b0b3b8" stroke-width="1.400" stroke-linecap="round" stroke-linejoin="round" style="position:absolute;left:7px;top:5px"><path d="M1.500 1l3.500 3.500L1.500 8"/></svg></div>

<div class="h2" style="top:375px">From photo</div>
<div class="abs" style="left:16px;top:402px;width:96px;height:96px;border-radius:8px;background:#d0d1c4;overflow:hidden">
 <div class="abs" style="left:8px;top:8px;width:80px;height:54px;border-radius:6px 6px 0 0;overflow:hidden"><svg viewBox="0 0 320 216" width="80" height="54" preserveAspectRatio="none" style="display:block"><use href="#ph"/></svg>
 <div class="abs" style="left:0;top:32px;width:80px;height:22px;background:linear-gradient(180deg,rgba(208,209,196,0) 0%,#d0d1c4 92%)"></div></div>
 <div class="sw" style="top:62px;height:26px"><i style="background:#93b8a8"></i><i style="background:#b07d6b"></i><i style="background:#6883a8"></i><i style="background:#7d7b68"></i></div>
</div>
<div class="h2" style="top:511.500px">Smart match</div>
<div class="abs" style="left:16px;top:539px;width:233px;height:41px;border-radius:8px;background:#242528">
 <svg class="abs" style="left:60px;top:13px" width="16" height="15" viewBox="0 0 16 15" fill="none" stroke-width="1.800" stroke-linecap="round" stroke-linejoin="round"><defs><linearGradient id="og" x1="0" y1="0" x2="1" y2="0"><stop offset="0" stop-color="#5a4af0"/><stop offset="1" stop-color="#19b7f5"/></linearGradient></defs><g stroke="url(#og)"><path d="M1.500 3.500h2.500c2.500 0 4.500 8 7.500 8h3M1.500 11.500h2.500c1 0 1.800-1 2.500-2.200M9 5.700c.7-1.200 1.500-2.200 2.500-2.200h3"/></g><path d="M12 1l3.500 2.500L12 6zM12 9l3.500 2.500L12 14z" fill="#19b7f5" stroke="#19b7f5" stroke-width=".8"/></svg>
 <div class="t" style="left:83px;top:13.5px;font-size:13px;font-weight:bold;color:#fff;letter-spacing:-0.05px">Optimize color</div>
</div>
</div>
<!-- collapse handle -->
<svg class="abs" style="left:333px;top:280px" width="9" height="51" viewBox="0 0 9 51"><path d="M0 0C.5 5 7.800 7 7.800 13v25c0 6-7.300 8-7.800 13z" fill="#2c2e30"/><path d="M4.800 21.500l-2.500 4 2.500 4" fill="none" stroke="#6d7076" stroke-width="1"/></svg>

</div></body></html>
